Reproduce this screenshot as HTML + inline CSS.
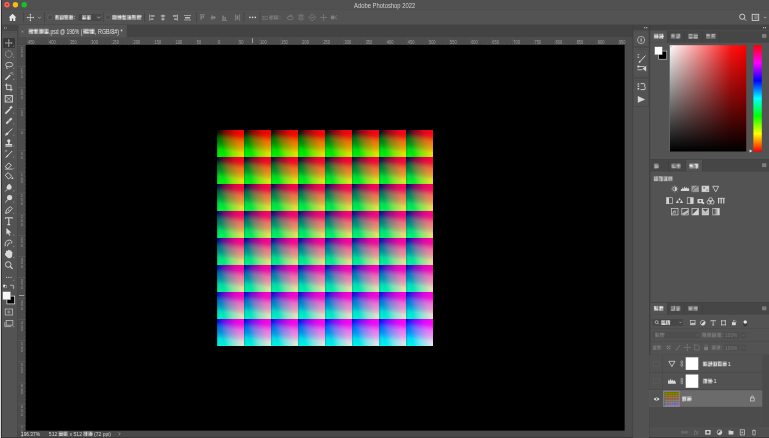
<!DOCTYPE html>
<html><head><meta charset="utf-8"><style>
html,body{margin:0;padding:0;width:769px;height:438px;overflow:hidden;background:#535353}
body{position:relative;font-family:"Liberation Sans",sans-serif}
.ov{position:absolute;left:0;top:0;will-change:transform}
svg text{font-family:"Liberation Sans",sans-serif}
.grid{position:absolute;left:0;top:0;width:769px;height:438px;filter:url(#satf)}
.t{position:absolute;width:27.02px;height:27.02px;
background:linear-gradient(to right,rgb(0,0,var(--b)),rgb(255,0,var(--b)));}
.t::after{content:"";position:absolute;inset:0;mix-blend-mode:screen;
background:linear-gradient(to bottom,rgb(0,0,0),rgb(0,255,0));}
</style></head><body>
<svg class="ov" width="769" height="438" viewBox="0 0 769 438"><rect x="0.00" y="0.00" width="769.00" height="438.00" fill="#535353" /><rect x="0.00" y="0.00" width="769.00" height="9.20" fill="#515151" /><rect x="0.00" y="9.00" width="769.00" height="0.60" fill="#464646" /><circle cx="7" cy="4.7" r="2.7" fill="#fd5d55"/><circle cx="15.4" cy="4.7" r="2.7" fill="#fdbb12"/><circle cx="24.2" cy="4.7" r="2.7" fill="#12c424"/><ellipse cx="7" cy="4.6" rx="1" ry="0.7" fill="#8c1a16"/><text x="354.10" y="7.80" font-size="6.4" fill="#d0d0d0" text-anchor="start" textLength="61.10" lengthAdjust="spacingAndGlyphs" >Adobe Photoshop 2022</text><rect x="0.00" y="9.50" width="769.00" height="15.30" fill="#535353" /><rect x="0.00" y="24.70" width="769.00" height="0.30" fill="#404040" /><rect x="1.30" y="25.00" width="16.00" height="413.00" fill="#535353" /><rect x="1.30" y="25.00" width="16.00" height="6.00" fill="#454545" /><rect x="17.20" y="25.00" width="0.60" height="413.00" fill="#3f3f3f" /><rect x="17.80" y="25.00" width="615.00" height="12.20" fill="#434343" /><rect x="18.40" y="25.00" width="108.40" height="12.20" fill="#545454" /><rect x="17.80" y="37.50" width="607.00" height="7.30" fill="#4c4c4c" /><rect x="17.80" y="37.50" width="7.70" height="394.00" fill="#4c4c4c" /><rect x="25.50" y="44.80" width="599.30" height="386.00" fill="#000000" /><rect x="624.80" y="37.50" width="8.00" height="400.00" fill="#4b4b4b" /><rect x="17.80" y="430.80" width="607.00" height="6.40" fill="#484848" /><rect x="0.00" y="437.00" width="769.00" height="1.00" fill="#3a3a3a" /><rect x="632.50" y="25.00" width="136.50" height="5.30" fill="#434343" /><rect x="632.60" y="25.00" width="0.60" height="413.00" fill="#3e3e3e" /><rect x="633.20" y="30.30" width="16.00" height="407.70" fill="#525252" /><rect x="649.20" y="25.00" width="1.20" height="413.00" fill="#3e3e3e" /><rect x="633.60" y="30.80" width="15.20" height="15.80" fill="#535353" stroke="#474747" stroke-width="0.6"/><rect x="633.60" y="47.60" width="15.20" height="29.60" fill="#535353" stroke="#474747" stroke-width="0.6"/><rect x="633.60" y="78.20" width="15.20" height="28.20" fill="#535353" stroke="#474747" stroke-width="0.6"/><rect x="650.40" y="30.80" width="118.60" height="12.00" fill="#464646" /><rect x="650.40" y="30.80" width="16.80" height="12.00" fill="#535353" /><rect x="650.40" y="42.80" width="118.60" height="116.30" fill="#535353" /><rect x="650.40" y="159.50" width="118.60" height="12.10" fill="#464646" /><rect x="685.60" y="159.50" width="16.40" height="12.10" fill="#535353" /><rect x="650.40" y="302.40" width="118.60" height="12.30" fill="#464646" /><rect x="650.40" y="302.40" width="16.80" height="12.30" fill="#535353" /><path d="M12.55 13.8 L8.7 17.6 L9.8 17.6 L9.8 21 L11.9 21 L11.9 18.6 L13.2 18.6 L13.2 21 L15.3 21 L15.3 17.6 L16.4 17.6 Z" fill="#e6e6e6"/><rect x="23.30" y="12.20" width="0.60" height="10.30" fill="#3f3f3f" /><g stroke="#d8d8d8" stroke-width="0.7" fill="none"><path d="M30.4 14.4 V20.7 M27.2 17.55 H33.6"/></g><g fill="#d8d8d8"><path d="M30.4 13.8 L29.4 15 H31.4Z M30.4 21.3 L29.4 20.1 H31.4Z M26.6 17.55 L27.8 16.55 V18.55Z M34.2 17.55 L33 16.55 V18.55Z"/></g><path d="M38 16.8 L39.4 18.4 L40.8 16.8" stroke="#b4b4b4" stroke-width="0.7" fill="none"/><rect x="44.00" y="12.20" width="0.60" height="10.30" fill="#3f3f3f" /><rect x="47.80" y="14.90" width="4.80" height="4.80" fill="#4a4a4a" rx="1.8" stroke="#6a6a6a" stroke-width="0.6"/><g fill="#dedede" opacity="1.0"><rect x="55.13" y="14.90" width="4.12" height="5.00" opacity="0.5"/><rect x="55.87" y="15.72" width="2.19" height="1.00" opacity="0.8"/><rect x="56.39" y="14.97" width="0.78" height="3.76" opacity="0.8"/><rect x="55.21" y="16.78" width="2.22" height="1.00" opacity="0.8"/><rect x="59.70" y="14.90" width="4.12" height="5.00" opacity="0.5"/><rect x="59.85" y="18.25" width="2.47" height="1.00" opacity="0.8"/><rect x="62.75" y="15.62" width="0.78" height="3.54" opacity="0.8"/><rect x="59.98" y="15.97" width="0.78" height="3.33" opacity="0.8"/><rect x="64.28" y="14.90" width="4.12" height="5.00" opacity="0.5"/><rect x="64.63" y="15.59" width="3.55" height="1.00" opacity="0.8"/><rect x="65.01" y="17.33" width="2.74" height="1.00" opacity="0.8"/><rect x="64.61" y="14.97" width="0.78" height="3.16" opacity="0.8"/><rect x="68.85" y="14.90" width="4.12" height="5.00" opacity="0.5"/><rect x="70.30" y="15.29" width="0.78" height="3.92" opacity="0.8"/><rect x="69.76" y="16.27" width="3.34" height="1.00" opacity="0.8"/><rect x="69.45" y="17.30" width="3.66" height="1.00" opacity="0.8"/></g><rect x="73.80" y="15.80" width="0.90" height="0.90" fill="#d0d0d0" /><rect x="73.80" y="18.30" width="0.90" height="0.90" fill="#d0d0d0" /><rect x="78.70" y="13.90" width="22.60" height="7.00" fill="#474747" rx="0.6"/><g fill="#dedede" opacity="1.0"><rect x="82.03" y="14.90" width="4.23" height="5.00" opacity="0.5"/><rect x="83.08" y="16.13" width="0.80" height="2.99" opacity="0.8"/><rect x="82.21" y="17.99" width="3.03" height="1.00" opacity="0.8"/><rect x="82.93" y="17.66" width="3.19" height="1.00" opacity="0.8"/><rect x="86.73" y="14.90" width="4.23" height="5.00" opacity="0.5"/><rect x="87.86" y="15.77" width="0.80" height="3.94" opacity="0.8"/><rect x="88.31" y="15.95" width="0.80" height="3.95" opacity="0.8"/><rect x="86.81" y="17.64" width="3.43" height="1.00" opacity="0.8"/></g><path d="M97.3 16.6 L98.7 18.2 L100.1 16.6" stroke="#c8c8c8" stroke-width="0.7" fill="none"/><rect x="103.20" y="12.20" width="0.60" height="10.30" fill="#3f3f3f" /><rect x="105.60" y="14.90" width="4.80" height="4.80" fill="#4a4a4a" rx="1.8" stroke="#6a6a6a" stroke-width="0.6"/><g fill="#dedede" opacity="1.0"><rect x="112.25" y="14.90" width="4.41" height="5.00" opacity="0.5"/><rect x="115.65" y="15.93" width="0.83" height="3.32" opacity="0.8"/><rect x="112.27" y="17.66" width="3.11" height="1.00" opacity="0.8"/><rect x="112.32" y="15.59" width="3.71" height="1.00" opacity="0.8"/><rect x="117.15" y="14.90" width="4.41" height="5.00" opacity="0.5"/><rect x="117.62" y="16.08" width="3.91" height="1.00" opacity="0.8"/><rect x="117.82" y="16.83" width="3.94" height="1.00" opacity="0.8"/><rect x="120.13" y="15.25" width="0.83" height="3.58" opacity="0.8"/><rect x="122.05" y="14.90" width="4.41" height="5.00" opacity="0.5"/><rect x="123.22" y="18.47" width="2.50" height="1.00" opacity="0.8"/><rect x="122.33" y="16.02" width="3.16" height="1.00" opacity="0.8"/><rect x="123.05" y="14.91" width="0.83" height="3.59" opacity="0.8"/><rect x="126.95" y="14.90" width="4.41" height="5.00" opacity="0.5"/><rect x="128.11" y="17.27" width="3.56" height="1.00" opacity="0.8"/><rect x="129.12" y="15.75" width="0.83" height="2.86" opacity="0.8"/><rect x="129.65" y="15.99" width="0.83" height="3.91" opacity="0.8"/><rect x="131.84" y="14.90" width="4.41" height="5.00" opacity="0.5"/><rect x="131.97" y="16.65" width="3.45" height="1.00" opacity="0.8"/><rect x="132.10" y="15.40" width="2.52" height="1.00" opacity="0.8"/><rect x="131.85" y="15.35" width="2.50" height="1.00" opacity="0.8"/><rect x="136.75" y="14.90" width="4.41" height="5.00" opacity="0.5"/><rect x="136.78" y="16.51" width="3.92" height="1.00" opacity="0.8"/><rect x="137.38" y="15.22" width="0.83" height="3.44" opacity="0.8"/><rect x="137.78" y="15.61" width="4.15" height="1.00" opacity="0.8"/></g><rect x="144.40" y="12.20" width="0.60" height="10.30" fill="#3f3f3f" /><g fill="#bdbdbd"><rect x="149.4" y="14.4" width="0.7" height="6.3"/><rect x="150.6" y="15.3" width="4" height="1.3"/><rect x="150.6" y="18.5" width="2.8" height="1.3"/><rect x="162.6" y="14.4" width="0.7" height="6.3"/><rect x="160.8" y="15.3" width="4.3" height="1.3"/><rect x="161.4" y="18.5" width="3.1" height="1.3"/><rect x="177.3" y="14.4" width="0.7" height="6.3"/><rect x="172.9" y="15.3" width="4" height="1.3"/><rect x="174.1" y="18.5" width="2.8" height="1.3"/><rect x="184" y="15.2" width="7" height="0.7"/><rect x="184" y="19.6" width="7" height="0.7"/><rect x="185" y="17" width="5" height="1.5"/></g><rect x="196.00" y="12.20" width="0.60" height="10.30" fill="#3f3f3f" /><g fill="#8a8a8a"><rect x="199.9" y="14.4" width="4.9" height="0.7"/><rect x="200.5" y="15.3" width="1.3" height="4.3"/><rect x="202.6" y="15.3" width="1.3" height="2.8"/><rect x="210.6" y="17.2" width="5.4" height="0.7"/><rect x="211.4" y="15.4" width="1.3" height="4.3"/><rect x="213.5" y="16.0" width="1.3" height="3.1"/><rect x="221.8" y="20.1" width="5.4" height="0.7"/><rect x="222.4" y="15.6" width="1.3" height="4.3"/><rect x="224.5" y="17.1" width="1.3" height="2.8"/><rect x="235" y="14.4" width="0.7" height="6.3"/><rect x="239.2" y="14.4" width="0.7" height="6.3"/><rect x="236.6" y="15.4" width="1.6" height="4.3"/></g><rect x="243.60" y="12.20" width="0.60" height="10.30" fill="#3f3f3f" /><g fill="#d6d6d6"><circle cx="249.9" cy="17.4" r="0.8"/><circle cx="252.6" cy="17.4" r="0.8"/><circle cx="255.3" cy="17.4" r="0.8"/></g><rect x="259.70" y="12.20" width="0.60" height="10.30" fill="#3f3f3f" /><text x="261.40" y="19.60" font-size="6.0" fill="#7e7e7e" text-anchor="start" textLength="6.80" lengthAdjust="spacingAndGlyphs" >3D</text><g fill="#7e7e7e" opacity="1.0"><rect x="269.24" y="15.10" width="4.32" height="4.60" opacity="0.5"/><rect x="269.34" y="17.00" width="2.36" height="0.92" opacity="0.8"/><rect x="270.23" y="16.24" width="2.47" height="0.92" opacity="0.8"/><rect x="269.87" y="18.61" width="2.44" height="0.92" opacity="0.8"/><rect x="274.04" y="15.10" width="4.32" height="4.60" opacity="0.5"/><rect x="274.27" y="15.71" width="0.82" height="3.99" opacity="0.8"/><rect x="276.42" y="15.40" width="0.82" height="3.20" opacity="0.8"/><rect x="274.68" y="17.99" width="3.66" height="0.92" opacity="0.8"/></g><rect x="279.60" y="15.80" width="0.80" height="0.80" fill="#7e7e7e" /><rect x="279.60" y="18.30" width="0.80" height="0.80" fill="#7e7e7e" /><g stroke="#7e7e7e" stroke-width="0.8" fill="none"><ellipse cx="290.2" cy="18" rx="3.2" ry="1.6"/><path d="M288.2 16.6 Q290 13.8 292.4 15.6"/><path d="M297.8 16.2 Q301 13.2 304.2 16.2 M297.8 18.6 Q301 21.6 304.2 18.6"/><rect x="299.8" y="15.8" width="2.4" height="2.2"/><path d="M312.3 13.9 L315.8 17.4 L312.3 20.9 L308.8 17.4Z"/><path d="M310.6 17.4 H314"/><path d="M323.6 14 V20.8 M320.2 17.4 H327"/><path d="M336.8 15.3 L335.2 17.4 L336.8 19.5" /></g><rect x="330.9" y="15.6" width="3.6" height="3.6" fill="#7e7e7e"/><g stroke="#d8d8d8" stroke-width="0.9" fill="none"><circle cx="742.2" cy="16.7" r="2.6"/><path d="M744.1 18.6 L746 20.5"/></g><rect x="752.2" y="14.3" width="6.5" height="6.1" fill="none" stroke="#cfcfcf" stroke-width="0.9"/><rect x="754.3" y="15.2" width="3.6" height="4.2" fill="#7a7a7a"/><path d="M764 16.9 L765.2 18.1 L766.4 16.9" stroke="#c8c8c8" stroke-width="0.7" fill="none"/><path d="M3.8 26.8 L5 28 L3.8 29.2 M5.6 26.8 L6.8 28 L5.6 29.2" stroke="#a8a8a8" stroke-width="0.6" fill="none"/><path d="M3 32.4 H15.5" stroke="#4a4a4a" stroke-width="0.6" stroke-dasharray="0.6 0.6"/><rect x="3.05" y="38.00" width="11.95" height="9.90" fill="#383838" /><path d="M8.8 39.8 V46.2 M5.6000000000000005 43 H12.0" stroke="#d8d8d8" stroke-width="0.6"/><path d="M8.8 39.2 l-0.8 1.1 h1.6Z M8.8 46.8 l-0.8 -1.1 h1.6Z M5.000000000000001 43 l1.1 -0.8 v1.6Z M12.600000000000001 43 l-1.1 -0.8 v1.6Z" fill="#d8d8d8"/><circle cx="8.8" cy="54.1" r="3.3" fill="none" stroke="#d8d8d8" stroke-width="0.7" stroke-dasharray="0.9 0.7"/><ellipse cx="9.200000000000001" cy="64.60000000000001" rx="3.6" ry="2.3" fill="none" stroke="#d8d8d8" stroke-width="0.8"/><path d="M6.800000000000001 66.2 q-0.6 1.6 0.6 2.8" stroke="#d8d8d8" stroke-width="0.9" fill="none"/><path d="M5.4 79.80000000000001 L10.200000000000001 75.0" stroke="#d8d8d8" stroke-width="1.6"/><path d="M11.200000000000001 72.2 v1.6 M12.200000000000001 74.2 h1.4 M12.0 72.80000000000001 l0.9 -0.9 M9.600000000000001 73.0 l0.6 0.6" stroke="#d8d8d8" stroke-width="0.6"/><path d="M6.6000000000000005 83.4 V89.60000000000001 H12.600000000000001 M4.800000000000001 85.2 H11.0 V91.4" stroke="#d8d8d8" stroke-width="0.9" fill="none"/><rect x="5.200000000000001" y="95.6" width="7.2" height="6.4" fill="none" stroke="#d8d8d8" stroke-width="0.9"/><path d="M5.200000000000001 95.6 L12.4 102.0 M12.4 95.6 L5.200000000000001 102.0" stroke="#d8d8d8" stroke-width="0.6"/><path d="M5.4 113.6 L10.0 109" stroke="#d8d8d8" stroke-width="1.7"/><path d="M9.200000000000001 107.8 L11.200000000000001 105.8 L12.600000000000001 107.2 L10.600000000000001 109.2Z" fill="#d8d8d8"/><path d="M5.6000000000000005 122.9 L11.0 117.5 L12.4 118.9 L7.000000000000001 124.3Z" fill="#d8d8d8"/><circle cx="9.0" cy="120.9" r="0.6" fill="#555"/><path d="M7.4 133.4 L12.200000000000001 128.6" stroke="#d8d8d8" stroke-width="1.0"/><path d="M5.000000000000001 135.8 Q5.4 132.6 7.4 132.4 L8.600000000000001 133.6 Q8.200000000000001 135.6 5.000000000000001 135.8Z" fill="#d8d8d8"/><circle cx="8.8" cy="140.8" r="1.6" fill="#d8d8d8"/><rect x="8.100000000000001" y="142" width="1.4" height="2" fill="#d8d8d8"/><rect x="5.4" y="144" width="6.8" height="1.6" fill="#d8d8d8"/><rect x="5.4" y="146" width="6.8" height="0.7" fill="#d8d8d8"/><path d="M5.800000000000001 157.6 L12.200000000000001 151" stroke="#d8d8d8" stroke-width="1"/><path d="M5.4 158 L7.4 154.8 L8.4 155.8Z" fill="#d8d8d8"/><path d="M4.800000000000001 151.6 q1 -1.6 2.4 -0.6" stroke="#d8d8d8" stroke-width="0.7" fill="none"/><path d="M5.200000000000001 166.7 L8.8 162.9 L11.4 165.3 L7.800000000000001 168.7 Z" fill="none" stroke="#d8d8d8" stroke-width="0.9"/><path d="M5.200000000000001 169.1 H12.600000000000001" stroke="#d8d8d8" stroke-width="0.8"/><path d="M5.200000000000001 175.2 L8.200000000000001 172.6 L11.600000000000001 176.2 L8.600000000000001 179.0Z" fill="none" stroke="#d8d8d8" stroke-width="0.9"/><circle cx="12.4" cy="178.2" r="0.9" fill="#d8d8d8"/><path d="M9.200000000000001 183.79999999999998 Q12.8 186.2 11.200000000000001 189.0 Q8.8 190.6 6.800000000000001 188.79999999999998 Q5.800000000000001 186.2 9.200000000000001 183.79999999999998Z" fill="#d8d8d8"/><path d="M7.200000000000001 189.4 L5.4 191.4" stroke="#d8d8d8" stroke-width="0.9"/><circle cx="9.600000000000001" cy="197.60000000000002" r="2.6" fill="#d8d8d8"/><path d="M7.800000000000001 199.8 L5.200000000000001 202.4" stroke="#d8d8d8" stroke-width="1"/><path d="M5.6000000000000005 213.39999999999998 L6.6000000000000005 209.6 L10.4 206.6 L12.200000000000001 208.39999999999998 L9.200000000000001 212.2Z" fill="none" stroke="#d8d8d8" stroke-width="0.9"/><circle cx="8.8" cy="210.2" r="0.6" fill="#d8d8d8"/><path d="M5.4 217.8 H12.200000000000001 V218.8 M5.4 217.8 V218.8 M8.8 217.8 V224.6 M7.4 224.6 H10.200000000000001" stroke="#d8d8d8" stroke-width="1.1" fill="none"/><path d="M6.4 228.0 L6.4 234.60000000000002 L8.0 233.20000000000002 L9.4 235.8 L10.4 235.20000000000002 L9.200000000000001 232.70000000000002 L11.4 232.60000000000002Z" fill="#d8d8d8"/><path d="M5.000000000000001 246.3 Q5.000000000000001 239.70000000000002 9.8 240.10000000000002 Q12.8 240.70000000000002 11.4 243.5 M7.4 246.3 Q7.800000000000001 242.5 10.200000000000001 242.70000000000002" stroke="#d8d8d8" stroke-width="0.9" fill="none"/><path d="M6.000000000000001 253.10000000000002 V251.10000000000002 Q7.200000000000001 249.9 8.0 251.10000000000002 V250.3 Q9.200000000000001 249.3 10.0 250.5 Q11.4 250.10000000000002 11.600000000000001 251.70000000000002 Q12.600000000000001 251.70000000000002 12.4 253.3 L12.0 256.7 Q10.4 258.7 8.0 258.1 L5.000000000000001 254.9 Q4.800000000000001 252.9 6.000000000000001 253.10000000000002Z" fill="#d8d8d8"/><circle cx="8.200000000000001" cy="264.5" r="2.8" fill="none" stroke="#d8d8d8" stroke-width="0.9"/><path d="M10.200000000000001 266.5 L12.600000000000001 268.90000000000003" stroke="#d8d8d8" stroke-width="1.1"/><path d="M14.2 67.40 L14.2 68.80 L12.8 68.80Z" fill="#9a9a9a"/><path d="M14.2 78.60 L14.2 80.00 L12.8 80.00Z" fill="#9a9a9a"/><path d="M14.2 112.20 L14.2 113.60 L12.8 113.60Z" fill="#9a9a9a"/><path d="M14.2 122.90 L14.2 124.30 L12.8 124.30Z" fill="#9a9a9a"/><path d="M14.2 134.20 L14.2 135.60 L12.8 135.60Z" fill="#9a9a9a"/><path d="M14.2 145.20 L14.2 146.60 L12.8 146.60Z" fill="#9a9a9a"/><path d="M14.2 156.20 L14.2 157.60 L12.8 157.60Z" fill="#9a9a9a"/><path d="M14.2 167.70 L14.2 169.10 L12.8 169.10Z" fill="#9a9a9a"/><path d="M14.2 189.80 L14.2 191.20 L12.8 191.20Z" fill="#9a9a9a"/><path d="M14.2 201.00 L14.2 202.40 L12.8 202.40Z" fill="#9a9a9a"/><path d="M14.2 212.40 L14.2 213.80 L12.8 213.80Z" fill="#9a9a9a"/><path d="M14.2 234.00 L14.2 235.40 L12.8 235.40Z" fill="#9a9a9a"/><path d="M14.2 245.50 L14.2 246.90 L12.8 246.90Z" fill="#9a9a9a"/><path d="M14.2 256.50 L14.2 257.90 L12.8 257.90Z" fill="#9a9a9a"/><path d="M14.2 45.20 L14.2 46.60 L12.8 46.60Z" fill="#9a9a9a"/><path d="M14.2 56.30 L14.2 57.70 L12.8 57.70Z" fill="#9a9a9a"/><g fill="#d8d8d8"><circle cx="6.6" cy="277.3" r="0.6"/><circle cx="8.8" cy="277.3" r="0.6"/><circle cx="11" cy="277.3" r="0.6"/></g><path d="M14.2 279.40 L14.2 280.80 L12.8 280.80Z" fill="#9a9a9a"/><rect x="3.9" y="285.4" width="2.4" height="2.4" fill="#111" stroke="#ddd" stroke-width="0.5"/><rect x="3.2" y="284.7" width="2.1" height="2.1" fill="#eee"/><path d="M10.6 285.3 H13.6 V288.4" stroke="#ddd" stroke-width="0.6" fill="none"/><path d="M10.2 285.3 l1 -0.8 v1.6Z M13.6 288.8 l-0.8 -1 h1.6Z" fill="#ddd"/><rect x="6.9" y="296.1" width="7.8" height="7.8" fill="#000" stroke="#e8e8e8" stroke-width="0.7"/><rect x="2.7" y="291.6" width="8" height="8.2" fill="#f6f6f6" stroke="#555" stroke-width="0.3"/><rect x="5.2" y="309" width="7.4" height="6" fill="none" stroke="#bdbdbd" stroke-width="0.8"/><circle cx="8.9" cy="312" r="1.6" fill="#8a8a8a"/><rect x="6.2" y="320.4" width="6.6" height="4.8" fill="none" stroke="#bdbdbd" stroke-width="0.8"/><path d="M4.8 322.2 V326.6 H11.2" stroke="#bdbdbd" stroke-width="0.8" fill="none"/><path d="M14.2 325.80 L14.2 327.20 L12.8 327.20Z" fill="#9a9a9a"/><path d="M21.6 30.7 L23.4 32.5 M23.4 30.7 L21.6 32.5" stroke="#a8a8a8" stroke-width="0.6"/><g fill="#e2e2e2" opacity="1.0"><rect x="28.56" y="28.70" width="4.66" height="5.20" opacity="0.5"/><rect x="29.61" y="29.83" width="4.37" height="1.04" opacity="0.8"/><rect x="31.51" y="29.76" width="0.88" height="4.14" opacity="0.8"/><rect x="29.02" y="30.98" width="2.39" height="1.04" opacity="0.8"/><rect x="33.73" y="28.70" width="4.66" height="5.20" opacity="0.5"/><rect x="34.07" y="30.05" width="3.76" height="1.04" opacity="0.8"/><rect x="35.44" y="29.92" width="0.88" height="3.98" opacity="0.8"/><rect x="35.15" y="28.99" width="0.88" height="3.33" opacity="0.8"/><rect x="38.91" y="28.70" width="4.66" height="5.20" opacity="0.5"/><rect x="39.72" y="29.76" width="4.19" height="1.04" opacity="0.8"/><rect x="40.73" y="29.55" width="0.88" height="4.35" opacity="0.8"/><rect x="40.09" y="31.54" width="3.95" height="1.04" opacity="0.8"/><rect x="44.08" y="28.70" width="4.66" height="5.20" opacity="0.5"/><rect x="45.90" y="28.93" width="0.88" height="4.50" opacity="0.8"/><rect x="45.34" y="32.08" width="3.15" height="1.04" opacity="0.8"/><rect x="45.02" y="32.65" width="2.68" height="1.04" opacity="0.8"/></g><text x="49.00" y="33.60" font-size="6.5" fill="#e0e0e0" text-anchor="start" textLength="33.30" lengthAdjust="spacingAndGlyphs" >.psd @ 196% (</text><g fill="#e2e2e2" opacity="1.0"><rect x="83.11" y="28.70" width="5.49" height="5.20" opacity="0.5"/><rect x="84.48" y="29.55" width="4.71" height="1.04" opacity="0.8"/><rect x="84.60" y="32.18" width="4.35" height="1.04" opacity="0.8"/><rect x="83.30" y="31.10" width="2.78" height="1.04" opacity="0.8"/><rect x="89.21" y="28.70" width="5.49" height="5.20" opacity="0.5"/><rect x="92.04" y="29.38" width="1.04" height="4.52" opacity="0.8"/><rect x="90.46" y="32.36" width="3.26" height="1.04" opacity="0.8"/><rect x="89.57" y="30.10" width="4.18" height="1.04" opacity="0.8"/></g><text x="95.00" y="33.60" font-size="6.5" fill="#e0e0e0" text-anchor="start" textLength="27.60" lengthAdjust="spacingAndGlyphs" >, RGB/8#) *</text><rect x="27.00" y="37.50" width="0.50" height="7.30" fill="#595959" /><text x="27.95" y="44.00" font-size="5.2" fill="#a0a0a0" text-anchor="start" textLength="6.60" lengthAdjust="spacingAndGlyphs" >450</text><rect x="31.28" y="43.60" width="0.40" height="1.20" fill="#585858" /><rect x="35.50" y="43.60" width="0.40" height="1.20" fill="#585858" /><rect x="39.72" y="43.60" width="0.40" height="1.20" fill="#585858" /><rect x="43.94" y="43.60" width="0.40" height="1.20" fill="#585858" /><rect x="48.16" y="42.60" width="0.40" height="2.20" fill="#585858" /><rect x="52.38" y="43.60" width="0.40" height="1.20" fill="#585858" /><rect x="56.60" y="43.60" width="0.40" height="1.20" fill="#585858" /><rect x="60.82" y="43.60" width="0.40" height="1.20" fill="#585858" /><rect x="65.04" y="43.60" width="0.40" height="1.20" fill="#585858" /><rect x="48.11" y="37.50" width="0.50" height="7.30" fill="#595959" /><text x="49.06" y="44.00" font-size="5.2" fill="#a0a0a0" text-anchor="start" textLength="6.60" lengthAdjust="spacingAndGlyphs" >400</text><rect x="52.38" y="43.60" width="0.40" height="1.20" fill="#585858" /><rect x="56.60" y="43.60" width="0.40" height="1.20" fill="#585858" /><rect x="60.82" y="43.60" width="0.40" height="1.20" fill="#585858" /><rect x="65.04" y="43.60" width="0.40" height="1.20" fill="#585858" /><rect x="69.26" y="42.60" width="0.40" height="2.20" fill="#585858" /><rect x="73.49" y="43.60" width="0.40" height="1.20" fill="#585858" /><rect x="77.71" y="43.60" width="0.40" height="1.20" fill="#585858" /><rect x="81.93" y="43.60" width="0.40" height="1.20" fill="#585858" /><rect x="86.15" y="43.60" width="0.40" height="1.20" fill="#585858" /><rect x="69.22" y="37.50" width="0.50" height="7.30" fill="#595959" /><text x="70.17" y="44.00" font-size="5.2" fill="#a0a0a0" text-anchor="start" textLength="6.60" lengthAdjust="spacingAndGlyphs" >350</text><rect x="73.49" y="43.60" width="0.40" height="1.20" fill="#585858" /><rect x="77.71" y="43.60" width="0.40" height="1.20" fill="#585858" /><rect x="81.93" y="43.60" width="0.40" height="1.20" fill="#585858" /><rect x="86.15" y="43.60" width="0.40" height="1.20" fill="#585858" /><rect x="90.37" y="42.60" width="0.40" height="2.20" fill="#585858" /><rect x="94.59" y="43.60" width="0.40" height="1.20" fill="#585858" /><rect x="98.81" y="43.60" width="0.40" height="1.20" fill="#585858" /><rect x="103.03" y="43.60" width="0.40" height="1.20" fill="#585858" /><rect x="107.25" y="43.60" width="0.40" height="1.20" fill="#585858" /><rect x="90.32" y="37.50" width="0.50" height="7.30" fill="#595959" /><text x="91.27" y="44.00" font-size="5.2" fill="#a0a0a0" text-anchor="start" textLength="6.60" lengthAdjust="spacingAndGlyphs" >300</text><rect x="94.59" y="43.60" width="0.40" height="1.20" fill="#585858" /><rect x="98.81" y="43.60" width="0.40" height="1.20" fill="#585858" /><rect x="103.03" y="43.60" width="0.40" height="1.20" fill="#585858" /><rect x="107.25" y="43.60" width="0.40" height="1.20" fill="#585858" /><rect x="111.47" y="42.60" width="0.40" height="2.20" fill="#585858" /><rect x="115.70" y="43.60" width="0.40" height="1.20" fill="#585858" /><rect x="119.92" y="43.60" width="0.40" height="1.20" fill="#585858" /><rect x="124.14" y="43.60" width="0.40" height="1.20" fill="#585858" /><rect x="128.36" y="43.60" width="0.40" height="1.20" fill="#585858" /><rect x="111.42" y="37.50" width="0.50" height="7.30" fill="#595959" /><text x="112.38" y="44.00" font-size="5.2" fill="#a0a0a0" text-anchor="start" textLength="6.60" lengthAdjust="spacingAndGlyphs" >250</text><rect x="115.70" y="43.60" width="0.40" height="1.20" fill="#585858" /><rect x="119.92" y="43.60" width="0.40" height="1.20" fill="#585858" /><rect x="124.14" y="43.60" width="0.40" height="1.20" fill="#585858" /><rect x="128.36" y="43.60" width="0.40" height="1.20" fill="#585858" /><rect x="132.58" y="42.60" width="0.40" height="2.20" fill="#585858" /><rect x="136.80" y="43.60" width="0.40" height="1.20" fill="#585858" /><rect x="141.02" y="43.60" width="0.40" height="1.20" fill="#585858" /><rect x="145.24" y="43.60" width="0.40" height="1.20" fill="#585858" /><rect x="149.46" y="43.60" width="0.40" height="1.20" fill="#585858" /><rect x="132.53" y="37.50" width="0.50" height="7.30" fill="#595959" /><text x="133.48" y="44.00" font-size="5.2" fill="#a0a0a0" text-anchor="start" textLength="6.60" lengthAdjust="spacingAndGlyphs" >200</text><rect x="136.80" y="43.60" width="0.40" height="1.20" fill="#585858" /><rect x="141.02" y="43.60" width="0.40" height="1.20" fill="#585858" /><rect x="145.24" y="43.60" width="0.40" height="1.20" fill="#585858" /><rect x="149.46" y="43.60" width="0.40" height="1.20" fill="#585858" /><rect x="153.68" y="42.60" width="0.40" height="2.20" fill="#585858" /><rect x="157.91" y="43.60" width="0.40" height="1.20" fill="#585858" /><rect x="162.13" y="43.60" width="0.40" height="1.20" fill="#585858" /><rect x="166.35" y="43.60" width="0.40" height="1.20" fill="#585858" /><rect x="170.57" y="43.60" width="0.40" height="1.20" fill="#585858" /><rect x="153.63" y="37.50" width="0.50" height="7.30" fill="#595959" /><text x="154.58" y="44.00" font-size="5.2" fill="#a0a0a0" text-anchor="start" textLength="6.60" lengthAdjust="spacingAndGlyphs" >150</text><rect x="157.91" y="43.60" width="0.40" height="1.20" fill="#585858" /><rect x="162.13" y="43.60" width="0.40" height="1.20" fill="#585858" /><rect x="166.35" y="43.60" width="0.40" height="1.20" fill="#585858" /><rect x="170.57" y="43.60" width="0.40" height="1.20" fill="#585858" /><rect x="174.79" y="42.60" width="0.40" height="2.20" fill="#585858" /><rect x="179.01" y="43.60" width="0.40" height="1.20" fill="#585858" /><rect x="183.23" y="43.60" width="0.40" height="1.20" fill="#585858" /><rect x="187.45" y="43.60" width="0.40" height="1.20" fill="#585858" /><rect x="191.67" y="43.60" width="0.40" height="1.20" fill="#585858" /><rect x="174.74" y="37.50" width="0.50" height="7.30" fill="#595959" /><text x="175.69" y="44.00" font-size="5.2" fill="#a0a0a0" text-anchor="start" textLength="6.60" lengthAdjust="spacingAndGlyphs" >100</text><rect x="179.01" y="43.60" width="0.40" height="1.20" fill="#585858" /><rect x="183.23" y="43.60" width="0.40" height="1.20" fill="#585858" /><rect x="187.45" y="43.60" width="0.40" height="1.20" fill="#585858" /><rect x="191.67" y="43.60" width="0.40" height="1.20" fill="#585858" /><rect x="195.89" y="42.60" width="0.40" height="2.20" fill="#585858" /><rect x="200.12" y="43.60" width="0.40" height="1.20" fill="#585858" /><rect x="204.34" y="43.60" width="0.40" height="1.20" fill="#585858" /><rect x="208.56" y="43.60" width="0.40" height="1.20" fill="#585858" /><rect x="212.78" y="43.60" width="0.40" height="1.20" fill="#585858" /><rect x="195.84" y="37.50" width="0.50" height="7.30" fill="#595959" /><text x="196.79" y="44.00" font-size="5.2" fill="#a0a0a0" text-anchor="start" textLength="4.40" lengthAdjust="spacingAndGlyphs" >50</text><rect x="200.12" y="43.60" width="0.40" height="1.20" fill="#585858" /><rect x="204.34" y="43.60" width="0.40" height="1.20" fill="#585858" /><rect x="208.56" y="43.60" width="0.40" height="1.20" fill="#585858" /><rect x="212.78" y="43.60" width="0.40" height="1.20" fill="#585858" /><rect x="217.00" y="42.60" width="0.40" height="2.20" fill="#585858" /><rect x="221.22" y="43.60" width="0.40" height="1.20" fill="#585858" /><rect x="225.44" y="43.60" width="0.40" height="1.20" fill="#585858" /><rect x="229.66" y="43.60" width="0.40" height="1.20" fill="#585858" /><rect x="233.88" y="43.60" width="0.40" height="1.20" fill="#585858" /><rect x="216.95" y="37.50" width="0.50" height="7.30" fill="#595959" /><text x="217.90" y="44.00" font-size="5.2" fill="#a0a0a0" text-anchor="start" textLength="2.30" lengthAdjust="spacingAndGlyphs" >0</text><rect x="221.22" y="43.60" width="0.40" height="1.20" fill="#585858" /><rect x="225.44" y="43.60" width="0.40" height="1.20" fill="#585858" /><rect x="229.66" y="43.60" width="0.40" height="1.20" fill="#585858" /><rect x="233.88" y="43.60" width="0.40" height="1.20" fill="#585858" /><rect x="238.10" y="42.60" width="0.40" height="2.20" fill="#585858" /><rect x="242.33" y="43.60" width="0.40" height="1.20" fill="#585858" /><rect x="246.55" y="43.60" width="0.40" height="1.20" fill="#585858" /><rect x="250.77" y="43.60" width="0.40" height="1.20" fill="#585858" /><rect x="254.99" y="43.60" width="0.40" height="1.20" fill="#585858" /><rect x="238.05" y="37.50" width="0.50" height="7.30" fill="#595959" /><text x="239.00" y="44.00" font-size="5.2" fill="#a0a0a0" text-anchor="start" textLength="4.40" lengthAdjust="spacingAndGlyphs" >50</text><rect x="242.33" y="43.60" width="0.40" height="1.20" fill="#585858" /><rect x="246.55" y="43.60" width="0.40" height="1.20" fill="#585858" /><rect x="250.77" y="43.60" width="0.40" height="1.20" fill="#585858" /><rect x="254.99" y="43.60" width="0.40" height="1.20" fill="#585858" /><rect x="259.21" y="42.60" width="0.40" height="2.20" fill="#585858" /><rect x="263.43" y="43.60" width="0.40" height="1.20" fill="#585858" /><rect x="267.65" y="43.60" width="0.40" height="1.20" fill="#585858" /><rect x="271.87" y="43.60" width="0.40" height="1.20" fill="#585858" /><rect x="276.09" y="43.60" width="0.40" height="1.20" fill="#585858" /><rect x="259.16" y="37.50" width="0.50" height="7.30" fill="#595959" /><text x="260.11" y="44.00" font-size="5.2" fill="#a0a0a0" text-anchor="start" textLength="6.60" lengthAdjust="spacingAndGlyphs" >100</text><rect x="263.43" y="43.60" width="0.40" height="1.20" fill="#585858" /><rect x="267.65" y="43.60" width="0.40" height="1.20" fill="#585858" /><rect x="271.87" y="43.60" width="0.40" height="1.20" fill="#585858" /><rect x="276.09" y="43.60" width="0.40" height="1.20" fill="#585858" /><rect x="280.31" y="42.60" width="0.40" height="2.20" fill="#585858" /><rect x="284.54" y="43.60" width="0.40" height="1.20" fill="#585858" /><rect x="288.76" y="43.60" width="0.40" height="1.20" fill="#585858" /><rect x="292.98" y="43.60" width="0.40" height="1.20" fill="#585858" /><rect x="297.20" y="43.60" width="0.40" height="1.20" fill="#585858" /><rect x="280.26" y="37.50" width="0.50" height="7.30" fill="#595959" /><text x="281.21" y="44.00" font-size="5.2" fill="#a0a0a0" text-anchor="start" textLength="6.60" lengthAdjust="spacingAndGlyphs" >150</text><rect x="284.54" y="43.60" width="0.40" height="1.20" fill="#585858" /><rect x="288.76" y="43.60" width="0.40" height="1.20" fill="#585858" /><rect x="292.98" y="43.60" width="0.40" height="1.20" fill="#585858" /><rect x="297.20" y="43.60" width="0.40" height="1.20" fill="#585858" /><rect x="301.42" y="42.60" width="0.40" height="2.20" fill="#585858" /><rect x="305.64" y="43.60" width="0.40" height="1.20" fill="#585858" /><rect x="309.86" y="43.60" width="0.40" height="1.20" fill="#585858" /><rect x="314.08" y="43.60" width="0.40" height="1.20" fill="#585858" /><rect x="318.30" y="43.60" width="0.40" height="1.20" fill="#585858" /><rect x="301.37" y="37.50" width="0.50" height="7.30" fill="#595959" /><text x="302.32" y="44.00" font-size="5.2" fill="#a0a0a0" text-anchor="start" textLength="6.60" lengthAdjust="spacingAndGlyphs" >200</text><rect x="305.64" y="43.60" width="0.40" height="1.20" fill="#585858" /><rect x="309.86" y="43.60" width="0.40" height="1.20" fill="#585858" /><rect x="314.08" y="43.60" width="0.40" height="1.20" fill="#585858" /><rect x="318.30" y="43.60" width="0.40" height="1.20" fill="#585858" /><rect x="322.53" y="42.60" width="0.40" height="2.20" fill="#585858" /><rect x="326.75" y="43.60" width="0.40" height="1.20" fill="#585858" /><rect x="330.97" y="43.60" width="0.40" height="1.20" fill="#585858" /><rect x="335.19" y="43.60" width="0.40" height="1.20" fill="#585858" /><rect x="339.41" y="43.60" width="0.40" height="1.20" fill="#585858" /><rect x="322.47" y="37.50" width="0.50" height="7.30" fill="#595959" /><text x="323.42" y="44.00" font-size="5.2" fill="#a0a0a0" text-anchor="start" textLength="6.60" lengthAdjust="spacingAndGlyphs" >250</text><rect x="326.75" y="43.60" width="0.40" height="1.20" fill="#585858" /><rect x="330.97" y="43.60" width="0.40" height="1.20" fill="#585858" /><rect x="335.19" y="43.60" width="0.40" height="1.20" fill="#585858" /><rect x="339.41" y="43.60" width="0.40" height="1.20" fill="#585858" /><rect x="343.63" y="42.60" width="0.40" height="2.20" fill="#585858" /><rect x="347.85" y="43.60" width="0.40" height="1.20" fill="#585858" /><rect x="352.07" y="43.60" width="0.40" height="1.20" fill="#585858" /><rect x="356.29" y="43.60" width="0.40" height="1.20" fill="#585858" /><rect x="360.51" y="43.60" width="0.40" height="1.20" fill="#585858" /><rect x="343.58" y="37.50" width="0.50" height="7.30" fill="#595959" /><text x="344.53" y="44.00" font-size="5.2" fill="#a0a0a0" text-anchor="start" textLength="6.60" lengthAdjust="spacingAndGlyphs" >300</text><rect x="347.85" y="43.60" width="0.40" height="1.20" fill="#585858" /><rect x="352.07" y="43.60" width="0.40" height="1.20" fill="#585858" /><rect x="356.29" y="43.60" width="0.40" height="1.20" fill="#585858" /><rect x="360.51" y="43.60" width="0.40" height="1.20" fill="#585858" /><rect x="364.74" y="42.60" width="0.40" height="2.20" fill="#585858" /><rect x="368.96" y="43.60" width="0.40" height="1.20" fill="#585858" /><rect x="373.18" y="43.60" width="0.40" height="1.20" fill="#585858" /><rect x="377.40" y="43.60" width="0.40" height="1.20" fill="#585858" /><rect x="381.62" y="43.60" width="0.40" height="1.20" fill="#585858" /><rect x="364.68" y="37.50" width="0.50" height="7.30" fill="#595959" /><text x="365.63" y="44.00" font-size="5.2" fill="#a0a0a0" text-anchor="start" textLength="6.60" lengthAdjust="spacingAndGlyphs" >350</text><rect x="368.96" y="43.60" width="0.40" height="1.20" fill="#585858" /><rect x="373.18" y="43.60" width="0.40" height="1.20" fill="#585858" /><rect x="377.40" y="43.60" width="0.40" height="1.20" fill="#585858" /><rect x="381.62" y="43.60" width="0.40" height="1.20" fill="#585858" /><rect x="385.84" y="42.60" width="0.40" height="2.20" fill="#585858" /><rect x="390.06" y="43.60" width="0.40" height="1.20" fill="#585858" /><rect x="394.28" y="43.60" width="0.40" height="1.20" fill="#585858" /><rect x="398.50" y="43.60" width="0.40" height="1.20" fill="#585858" /><rect x="402.72" y="43.60" width="0.40" height="1.20" fill="#585858" /><rect x="385.79" y="37.50" width="0.50" height="7.30" fill="#595959" /><text x="386.74" y="44.00" font-size="5.2" fill="#a0a0a0" text-anchor="start" textLength="6.60" lengthAdjust="spacingAndGlyphs" >400</text><rect x="390.06" y="43.60" width="0.40" height="1.20" fill="#585858" /><rect x="394.28" y="43.60" width="0.40" height="1.20" fill="#585858" /><rect x="398.50" y="43.60" width="0.40" height="1.20" fill="#585858" /><rect x="402.72" y="43.60" width="0.40" height="1.20" fill="#585858" /><rect x="406.94" y="42.60" width="0.40" height="2.20" fill="#585858" /><rect x="411.17" y="43.60" width="0.40" height="1.20" fill="#585858" /><rect x="415.39" y="43.60" width="0.40" height="1.20" fill="#585858" /><rect x="419.61" y="43.60" width="0.40" height="1.20" fill="#585858" /><rect x="423.83" y="43.60" width="0.40" height="1.20" fill="#585858" /><rect x="406.89" y="37.50" width="0.50" height="7.30" fill="#595959" /><text x="407.84" y="44.00" font-size="5.2" fill="#a0a0a0" text-anchor="start" textLength="6.60" lengthAdjust="spacingAndGlyphs" >450</text><rect x="411.17" y="43.60" width="0.40" height="1.20" fill="#585858" /><rect x="415.39" y="43.60" width="0.40" height="1.20" fill="#585858" /><rect x="419.61" y="43.60" width="0.40" height="1.20" fill="#585858" /><rect x="423.83" y="43.60" width="0.40" height="1.20" fill="#585858" /><rect x="428.05" y="42.60" width="0.40" height="2.20" fill="#585858" /><rect x="432.27" y="43.60" width="0.40" height="1.20" fill="#585858" /><rect x="436.49" y="43.60" width="0.40" height="1.20" fill="#585858" /><rect x="440.71" y="43.60" width="0.40" height="1.20" fill="#585858" /><rect x="444.93" y="43.60" width="0.40" height="1.20" fill="#585858" /><rect x="428.00" y="37.50" width="0.50" height="7.30" fill="#595959" /><text x="428.95" y="44.00" font-size="5.2" fill="#a0a0a0" text-anchor="start" textLength="6.60" lengthAdjust="spacingAndGlyphs" >500</text><rect x="432.27" y="43.60" width="0.40" height="1.20" fill="#585858" /><rect x="436.49" y="43.60" width="0.40" height="1.20" fill="#585858" /><rect x="440.71" y="43.60" width="0.40" height="1.20" fill="#585858" /><rect x="444.93" y="43.60" width="0.40" height="1.20" fill="#585858" /><rect x="449.16" y="42.60" width="0.40" height="2.20" fill="#585858" /><rect x="453.38" y="43.60" width="0.40" height="1.20" fill="#585858" /><rect x="457.60" y="43.60" width="0.40" height="1.20" fill="#585858" /><rect x="461.82" y="43.60" width="0.40" height="1.20" fill="#585858" /><rect x="466.04" y="43.60" width="0.40" height="1.20" fill="#585858" /><rect x="449.10" y="37.50" width="0.50" height="7.30" fill="#595959" /><text x="450.05" y="44.00" font-size="5.2" fill="#a0a0a0" text-anchor="start" textLength="6.60" lengthAdjust="spacingAndGlyphs" >550</text><rect x="453.38" y="43.60" width="0.40" height="1.20" fill="#585858" /><rect x="457.60" y="43.60" width="0.40" height="1.20" fill="#585858" /><rect x="461.82" y="43.60" width="0.40" height="1.20" fill="#585858" /><rect x="466.04" y="43.60" width="0.40" height="1.20" fill="#585858" /><rect x="470.26" y="42.60" width="0.40" height="2.20" fill="#585858" /><rect x="474.48" y="43.60" width="0.40" height="1.20" fill="#585858" /><rect x="478.70" y="43.60" width="0.40" height="1.20" fill="#585858" /><rect x="482.92" y="43.60" width="0.40" height="1.20" fill="#585858" /><rect x="487.14" y="43.60" width="0.40" height="1.20" fill="#585858" /><rect x="470.21" y="37.50" width="0.50" height="7.30" fill="#595959" /><text x="471.16" y="44.00" font-size="5.2" fill="#a0a0a0" text-anchor="start" textLength="6.60" lengthAdjust="spacingAndGlyphs" >600</text><rect x="474.48" y="43.60" width="0.40" height="1.20" fill="#585858" /><rect x="478.70" y="43.60" width="0.40" height="1.20" fill="#585858" /><rect x="482.92" y="43.60" width="0.40" height="1.20" fill="#585858" /><rect x="487.14" y="43.60" width="0.40" height="1.20" fill="#585858" /><rect x="491.37" y="42.60" width="0.40" height="2.20" fill="#585858" /><rect x="495.59" y="43.60" width="0.40" height="1.20" fill="#585858" /><rect x="499.81" y="43.60" width="0.40" height="1.20" fill="#585858" /><rect x="504.03" y="43.60" width="0.40" height="1.20" fill="#585858" /><rect x="508.25" y="43.60" width="0.40" height="1.20" fill="#585858" /><rect x="491.31" y="37.50" width="0.50" height="7.30" fill="#595959" /><text x="492.26" y="44.00" font-size="5.2" fill="#a0a0a0" text-anchor="start" textLength="6.60" lengthAdjust="spacingAndGlyphs" >650</text><rect x="495.59" y="43.60" width="0.40" height="1.20" fill="#585858" /><rect x="499.81" y="43.60" width="0.40" height="1.20" fill="#585858" /><rect x="504.03" y="43.60" width="0.40" height="1.20" fill="#585858" /><rect x="508.25" y="43.60" width="0.40" height="1.20" fill="#585858" /><rect x="512.47" y="42.60" width="0.40" height="2.20" fill="#585858" /><rect x="516.69" y="43.60" width="0.40" height="1.20" fill="#585858" /><rect x="520.91" y="43.60" width="0.40" height="1.20" fill="#585858" /><rect x="525.13" y="43.60" width="0.40" height="1.20" fill="#585858" /><rect x="529.35" y="43.60" width="0.40" height="1.20" fill="#585858" /><rect x="512.42" y="37.50" width="0.50" height="7.30" fill="#595959" /><text x="513.37" y="44.00" font-size="5.2" fill="#a0a0a0" text-anchor="start" textLength="6.60" lengthAdjust="spacingAndGlyphs" >700</text><rect x="516.69" y="43.60" width="0.40" height="1.20" fill="#585858" /><rect x="520.91" y="43.60" width="0.40" height="1.20" fill="#585858" /><rect x="525.13" y="43.60" width="0.40" height="1.20" fill="#585858" /><rect x="529.35" y="43.60" width="0.40" height="1.20" fill="#585858" /><rect x="533.57" y="42.60" width="0.40" height="2.20" fill="#585858" /><rect x="537.80" y="43.60" width="0.40" height="1.20" fill="#585858" /><rect x="542.02" y="43.60" width="0.40" height="1.20" fill="#585858" /><rect x="546.24" y="43.60" width="0.40" height="1.20" fill="#585858" /><rect x="550.46" y="43.60" width="0.40" height="1.20" fill="#585858" /><rect x="533.52" y="37.50" width="0.50" height="7.30" fill="#595959" /><text x="534.48" y="44.00" font-size="5.2" fill="#a0a0a0" text-anchor="start" textLength="6.60" lengthAdjust="spacingAndGlyphs" >750</text><rect x="537.80" y="43.60" width="0.40" height="1.20" fill="#585858" /><rect x="542.02" y="43.60" width="0.40" height="1.20" fill="#585858" /><rect x="546.24" y="43.60" width="0.40" height="1.20" fill="#585858" /><rect x="550.46" y="43.60" width="0.40" height="1.20" fill="#585858" /><rect x="554.68" y="42.60" width="0.40" height="2.20" fill="#585858" /><rect x="558.90" y="43.60" width="0.40" height="1.20" fill="#585858" /><rect x="563.12" y="43.60" width="0.40" height="1.20" fill="#585858" /><rect x="567.34" y="43.60" width="0.40" height="1.20" fill="#585858" /><rect x="571.56" y="43.60" width="0.40" height="1.20" fill="#585858" /><rect x="554.63" y="37.50" width="0.50" height="7.30" fill="#595959" /><text x="555.58" y="44.00" font-size="5.2" fill="#a0a0a0" text-anchor="start" textLength="6.60" lengthAdjust="spacingAndGlyphs" >800</text><rect x="558.90" y="43.60" width="0.40" height="1.20" fill="#585858" /><rect x="563.12" y="43.60" width="0.40" height="1.20" fill="#585858" /><rect x="567.34" y="43.60" width="0.40" height="1.20" fill="#585858" /><rect x="571.56" y="43.60" width="0.40" height="1.20" fill="#585858" /><rect x="575.78" y="42.60" width="0.40" height="2.20" fill="#585858" /><rect x="580.01" y="43.60" width="0.40" height="1.20" fill="#585858" /><rect x="584.23" y="43.60" width="0.40" height="1.20" fill="#585858" /><rect x="588.45" y="43.60" width="0.40" height="1.20" fill="#585858" /><rect x="592.67" y="43.60" width="0.40" height="1.20" fill="#585858" /><rect x="575.73" y="37.50" width="0.50" height="7.30" fill="#595959" /><text x="576.68" y="44.00" font-size="5.2" fill="#a0a0a0" text-anchor="start" textLength="6.60" lengthAdjust="spacingAndGlyphs" >850</text><rect x="580.01" y="43.60" width="0.40" height="1.20" fill="#585858" /><rect x="584.23" y="43.60" width="0.40" height="1.20" fill="#585858" /><rect x="588.45" y="43.60" width="0.40" height="1.20" fill="#585858" /><rect x="592.67" y="43.60" width="0.40" height="1.20" fill="#585858" /><rect x="596.89" y="42.60" width="0.40" height="2.20" fill="#585858" /><rect x="601.11" y="43.60" width="0.40" height="1.20" fill="#585858" /><rect x="605.33" y="43.60" width="0.40" height="1.20" fill="#585858" /><rect x="609.55" y="43.60" width="0.40" height="1.20" fill="#585858" /><rect x="613.77" y="43.60" width="0.40" height="1.20" fill="#585858" /><rect x="596.84" y="37.50" width="0.50" height="7.30" fill="#595959" /><text x="597.79" y="44.00" font-size="5.2" fill="#a0a0a0" text-anchor="start" textLength="6.60" lengthAdjust="spacingAndGlyphs" >900</text><rect x="601.11" y="43.60" width="0.40" height="1.20" fill="#585858" /><rect x="605.33" y="43.60" width="0.40" height="1.20" fill="#585858" /><rect x="609.55" y="43.60" width="0.40" height="1.20" fill="#585858" /><rect x="613.77" y="43.60" width="0.40" height="1.20" fill="#585858" /><rect x="617.99" y="42.60" width="0.40" height="2.20" fill="#585858" /><rect x="622.22" y="43.60" width="0.40" height="1.20" fill="#585858" /><rect x="617.94" y="37.50" width="0.50" height="7.30" fill="#595959" /><text x="618.89" y="44.00" font-size="5.2" fill="#a0a0a0" text-anchor="start" textLength="6.60" lengthAdjust="spacingAndGlyphs" >950</text><rect x="622.22" y="43.60" width="0.40" height="1.20" fill="#585858" /><rect x="17.80" y="45.03" width="7.70" height="0.50" fill="#626262" /><text x="21.80" y="49.58" font-size="4.0" fill="#9a9a9a" text-anchor="middle" >2</text><text x="21.80" y="53.18" font-size="4.0" fill="#9a9a9a" text-anchor="middle" >0</text><text x="21.80" y="56.78" font-size="4.0" fill="#9a9a9a" text-anchor="middle" >0</text><rect x="24.30" y="49.30" width="1.20" height="0.40" fill="#585858" /><rect x="24.30" y="53.52" width="1.20" height="0.40" fill="#585858" /><rect x="24.30" y="57.74" width="1.20" height="0.40" fill="#585858" /><rect x="24.30" y="61.96" width="1.20" height="0.40" fill="#585858" /><rect x="23.30" y="66.18" width="2.20" height="0.40" fill="#585858" /><rect x="24.30" y="70.41" width="1.20" height="0.40" fill="#585858" /><rect x="24.30" y="74.63" width="1.20" height="0.40" fill="#585858" /><rect x="24.30" y="78.85" width="1.20" height="0.40" fill="#585858" /><rect x="24.30" y="83.07" width="1.20" height="0.40" fill="#585858" /><rect x="17.80" y="66.13" width="7.70" height="0.50" fill="#626262" /><text x="21.80" y="70.68" font-size="4.0" fill="#9a9a9a" text-anchor="middle" >1</text><text x="21.80" y="74.28" font-size="4.0" fill="#9a9a9a" text-anchor="middle" >5</text><text x="21.80" y="77.88" font-size="4.0" fill="#9a9a9a" text-anchor="middle" >0</text><rect x="24.30" y="70.41" width="1.20" height="0.40" fill="#585858" /><rect x="24.30" y="74.63" width="1.20" height="0.40" fill="#585858" /><rect x="24.30" y="78.85" width="1.20" height="0.40" fill="#585858" /><rect x="24.30" y="83.07" width="1.20" height="0.40" fill="#585858" /><rect x="23.30" y="87.29" width="2.20" height="0.40" fill="#585858" /><rect x="24.30" y="91.51" width="1.20" height="0.40" fill="#585858" /><rect x="24.30" y="95.73" width="1.20" height="0.40" fill="#585858" /><rect x="24.30" y="99.95" width="1.20" height="0.40" fill="#585858" /><rect x="24.30" y="104.17" width="1.20" height="0.40" fill="#585858" /><rect x="17.80" y="87.24" width="7.70" height="0.50" fill="#626262" /><text x="21.80" y="91.79" font-size="4.0" fill="#9a9a9a" text-anchor="middle" >1</text><text x="21.80" y="95.39" font-size="4.0" fill="#9a9a9a" text-anchor="middle" >0</text><text x="21.80" y="98.99" font-size="4.0" fill="#9a9a9a" text-anchor="middle" >0</text><rect x="24.30" y="91.51" width="1.20" height="0.40" fill="#585858" /><rect x="24.30" y="95.73" width="1.20" height="0.40" fill="#585858" /><rect x="24.30" y="99.95" width="1.20" height="0.40" fill="#585858" /><rect x="24.30" y="104.17" width="1.20" height="0.40" fill="#585858" /><rect x="23.30" y="108.39" width="2.20" height="0.40" fill="#585858" /><rect x="24.30" y="112.62" width="1.20" height="0.40" fill="#585858" /><rect x="24.30" y="116.84" width="1.20" height="0.40" fill="#585858" /><rect x="24.30" y="121.06" width="1.20" height="0.40" fill="#585858" /><rect x="24.30" y="125.28" width="1.20" height="0.40" fill="#585858" /><rect x="17.80" y="108.34" width="7.70" height="0.50" fill="#626262" /><text x="21.80" y="112.89" font-size="4.0" fill="#9a9a9a" text-anchor="middle" >5</text><text x="21.80" y="116.49" font-size="4.0" fill="#9a9a9a" text-anchor="middle" >0</text><rect x="24.30" y="112.62" width="1.20" height="0.40" fill="#585858" /><rect x="24.30" y="116.84" width="1.20" height="0.40" fill="#585858" /><rect x="24.30" y="121.06" width="1.20" height="0.40" fill="#585858" /><rect x="24.30" y="125.28" width="1.20" height="0.40" fill="#585858" /><rect x="23.30" y="129.50" width="2.20" height="0.40" fill="#585858" /><rect x="24.30" y="133.72" width="1.20" height="0.40" fill="#585858" /><rect x="24.30" y="137.94" width="1.20" height="0.40" fill="#585858" /><rect x="24.30" y="142.16" width="1.20" height="0.40" fill="#585858" /><rect x="24.30" y="146.38" width="1.20" height="0.40" fill="#585858" /><rect x="17.80" y="129.45" width="7.70" height="0.50" fill="#626262" /><text x="21.80" y="134.00" font-size="4.0" fill="#9a9a9a" text-anchor="middle" >0</text><rect x="24.30" y="133.72" width="1.20" height="0.40" fill="#585858" /><rect x="24.30" y="137.94" width="1.20" height="0.40" fill="#585858" /><rect x="24.30" y="142.16" width="1.20" height="0.40" fill="#585858" /><rect x="24.30" y="146.38" width="1.20" height="0.40" fill="#585858" /><rect x="23.30" y="150.60" width="2.20" height="0.40" fill="#585858" /><rect x="24.30" y="154.83" width="1.20" height="0.40" fill="#585858" /><rect x="24.30" y="159.05" width="1.20" height="0.40" fill="#585858" /><rect x="24.30" y="163.27" width="1.20" height="0.40" fill="#585858" /><rect x="24.30" y="167.49" width="1.20" height="0.40" fill="#585858" /><rect x="17.80" y="150.55" width="7.70" height="0.50" fill="#626262" /><text x="21.80" y="155.10" font-size="4.0" fill="#9a9a9a" text-anchor="middle" >5</text><text x="21.80" y="158.70" font-size="4.0" fill="#9a9a9a" text-anchor="middle" >0</text><rect x="24.30" y="154.83" width="1.20" height="0.40" fill="#585858" /><rect x="24.30" y="159.05" width="1.20" height="0.40" fill="#585858" /><rect x="24.30" y="163.27" width="1.20" height="0.40" fill="#585858" /><rect x="24.30" y="167.49" width="1.20" height="0.40" fill="#585858" /><rect x="23.30" y="171.71" width="2.20" height="0.40" fill="#585858" /><rect x="24.30" y="175.93" width="1.20" height="0.40" fill="#585858" /><rect x="24.30" y="180.15" width="1.20" height="0.40" fill="#585858" /><rect x="24.30" y="184.37" width="1.20" height="0.40" fill="#585858" /><rect x="24.30" y="188.59" width="1.20" height="0.40" fill="#585858" /><rect x="17.80" y="171.66" width="7.70" height="0.50" fill="#626262" /><text x="21.80" y="176.21" font-size="4.0" fill="#9a9a9a" text-anchor="middle" >1</text><text x="21.80" y="179.81" font-size="4.0" fill="#9a9a9a" text-anchor="middle" >0</text><text x="21.80" y="183.41" font-size="4.0" fill="#9a9a9a" text-anchor="middle" >0</text><rect x="24.30" y="175.93" width="1.20" height="0.40" fill="#585858" /><rect x="24.30" y="180.15" width="1.20" height="0.40" fill="#585858" /><rect x="24.30" y="184.37" width="1.20" height="0.40" fill="#585858" /><rect x="24.30" y="188.59" width="1.20" height="0.40" fill="#585858" /><rect x="23.30" y="192.81" width="2.20" height="0.40" fill="#585858" /><rect x="24.30" y="197.04" width="1.20" height="0.40" fill="#585858" /><rect x="24.30" y="201.26" width="1.20" height="0.40" fill="#585858" /><rect x="24.30" y="205.48" width="1.20" height="0.40" fill="#585858" /><rect x="24.30" y="209.70" width="1.20" height="0.40" fill="#585858" /><rect x="17.80" y="192.76" width="7.70" height="0.50" fill="#626262" /><text x="21.80" y="197.31" font-size="4.0" fill="#9a9a9a" text-anchor="middle" >1</text><text x="21.80" y="200.91" font-size="4.0" fill="#9a9a9a" text-anchor="middle" >5</text><text x="21.80" y="204.51" font-size="4.0" fill="#9a9a9a" text-anchor="middle" >0</text><rect x="24.30" y="197.04" width="1.20" height="0.40" fill="#585858" /><rect x="24.30" y="201.26" width="1.20" height="0.40" fill="#585858" /><rect x="24.30" y="205.48" width="1.20" height="0.40" fill="#585858" /><rect x="24.30" y="209.70" width="1.20" height="0.40" fill="#585858" /><rect x="23.30" y="213.92" width="2.20" height="0.40" fill="#585858" /><rect x="24.30" y="218.14" width="1.20" height="0.40" fill="#585858" /><rect x="24.30" y="222.36" width="1.20" height="0.40" fill="#585858" /><rect x="24.30" y="226.58" width="1.20" height="0.40" fill="#585858" /><rect x="24.30" y="230.80" width="1.20" height="0.40" fill="#585858" /><rect x="17.80" y="213.87" width="7.70" height="0.50" fill="#626262" /><text x="21.80" y="218.42" font-size="4.0" fill="#9a9a9a" text-anchor="middle" >2</text><text x="21.80" y="222.02" font-size="4.0" fill="#9a9a9a" text-anchor="middle" >0</text><text x="21.80" y="225.62" font-size="4.0" fill="#9a9a9a" text-anchor="middle" >0</text><rect x="24.30" y="218.14" width="1.20" height="0.40" fill="#585858" /><rect x="24.30" y="222.36" width="1.20" height="0.40" fill="#585858" /><rect x="24.30" y="226.58" width="1.20" height="0.40" fill="#585858" /><rect x="24.30" y="230.80" width="1.20" height="0.40" fill="#585858" /><rect x="23.30" y="235.03" width="2.20" height="0.40" fill="#585858" /><rect x="24.30" y="239.25" width="1.20" height="0.40" fill="#585858" /><rect x="24.30" y="243.47" width="1.20" height="0.40" fill="#585858" /><rect x="24.30" y="247.69" width="1.20" height="0.40" fill="#585858" /><rect x="24.30" y="251.91" width="1.20" height="0.40" fill="#585858" /><rect x="17.80" y="234.97" width="7.70" height="0.50" fill="#626262" /><text x="21.80" y="239.52" font-size="4.0" fill="#9a9a9a" text-anchor="middle" >2</text><text x="21.80" y="243.12" font-size="4.0" fill="#9a9a9a" text-anchor="middle" >5</text><text x="21.80" y="246.72" font-size="4.0" fill="#9a9a9a" text-anchor="middle" >0</text><rect x="24.30" y="239.25" width="1.20" height="0.40" fill="#585858" /><rect x="24.30" y="243.47" width="1.20" height="0.40" fill="#585858" /><rect x="24.30" y="247.69" width="1.20" height="0.40" fill="#585858" /><rect x="24.30" y="251.91" width="1.20" height="0.40" fill="#585858" /><rect x="23.30" y="256.13" width="2.20" height="0.40" fill="#585858" /><rect x="24.30" y="260.35" width="1.20" height="0.40" fill="#585858" /><rect x="24.30" y="264.57" width="1.20" height="0.40" fill="#585858" /><rect x="24.30" y="268.79" width="1.20" height="0.40" fill="#585858" /><rect x="24.30" y="273.01" width="1.20" height="0.40" fill="#585858" /><rect x="17.80" y="256.08" width="7.70" height="0.50" fill="#626262" /><text x="21.80" y="260.63" font-size="4.0" fill="#9a9a9a" text-anchor="middle" >3</text><text x="21.80" y="264.23" font-size="4.0" fill="#9a9a9a" text-anchor="middle" >0</text><text x="21.80" y="267.83" font-size="4.0" fill="#9a9a9a" text-anchor="middle" >0</text><rect x="24.30" y="260.35" width="1.20" height="0.40" fill="#585858" /><rect x="24.30" y="264.57" width="1.20" height="0.40" fill="#585858" /><rect x="24.30" y="268.79" width="1.20" height="0.40" fill="#585858" /><rect x="24.30" y="273.01" width="1.20" height="0.40" fill="#585858" /><rect x="23.30" y="277.24" width="2.20" height="0.40" fill="#585858" /><rect x="24.30" y="281.46" width="1.20" height="0.40" fill="#585858" /><rect x="24.30" y="285.68" width="1.20" height="0.40" fill="#585858" /><rect x="24.30" y="289.90" width="1.20" height="0.40" fill="#585858" /><rect x="24.30" y="294.12" width="1.20" height="0.40" fill="#585858" /><rect x="17.80" y="277.18" width="7.70" height="0.50" fill="#626262" /><text x="21.80" y="281.73" font-size="4.0" fill="#9a9a9a" text-anchor="middle" >3</text><text x="21.80" y="285.33" font-size="4.0" fill="#9a9a9a" text-anchor="middle" >5</text><text x="21.80" y="288.93" font-size="4.0" fill="#9a9a9a" text-anchor="middle" >0</text><rect x="24.30" y="281.46" width="1.20" height="0.40" fill="#585858" /><rect x="24.30" y="285.68" width="1.20" height="0.40" fill="#585858" /><rect x="24.30" y="289.90" width="1.20" height="0.40" fill="#585858" /><rect x="24.30" y="294.12" width="1.20" height="0.40" fill="#585858" /><rect x="23.30" y="298.34" width="2.20" height="0.40" fill="#585858" /><rect x="24.30" y="302.56" width="1.20" height="0.40" fill="#585858" /><rect x="24.30" y="306.78" width="1.20" height="0.40" fill="#585858" /><rect x="24.30" y="311.00" width="1.20" height="0.40" fill="#585858" /><rect x="24.30" y="315.22" width="1.20" height="0.40" fill="#585858" /><rect x="17.80" y="298.29" width="7.70" height="0.50" fill="#626262" /><text x="21.80" y="302.84" font-size="4.0" fill="#9a9a9a" text-anchor="middle" >4</text><text x="21.80" y="306.44" font-size="4.0" fill="#9a9a9a" text-anchor="middle" >0</text><text x="21.80" y="310.04" font-size="4.0" fill="#9a9a9a" text-anchor="middle" >0</text><rect x="24.30" y="302.56" width="1.20" height="0.40" fill="#585858" /><rect x="24.30" y="306.78" width="1.20" height="0.40" fill="#585858" /><rect x="24.30" y="311.00" width="1.20" height="0.40" fill="#585858" /><rect x="24.30" y="315.22" width="1.20" height="0.40" fill="#585858" /><rect x="23.30" y="319.44" width="2.20" height="0.40" fill="#585858" /><rect x="24.30" y="323.67" width="1.20" height="0.40" fill="#585858" /><rect x="24.30" y="327.89" width="1.20" height="0.40" fill="#585858" /><rect x="24.30" y="332.11" width="1.20" height="0.40" fill="#585858" /><rect x="24.30" y="336.33" width="1.20" height="0.40" fill="#585858" /><rect x="17.80" y="319.39" width="7.70" height="0.50" fill="#626262" /><text x="21.80" y="323.94" font-size="4.0" fill="#9a9a9a" text-anchor="middle" >4</text><text x="21.80" y="327.55" font-size="4.0" fill="#9a9a9a" text-anchor="middle" >5</text><text x="21.80" y="331.14" font-size="4.0" fill="#9a9a9a" text-anchor="middle" >0</text><rect x="24.30" y="323.67" width="1.20" height="0.40" fill="#585858" /><rect x="24.30" y="327.89" width="1.20" height="0.40" fill="#585858" /><rect x="24.30" y="332.11" width="1.20" height="0.40" fill="#585858" /><rect x="24.30" y="336.33" width="1.20" height="0.40" fill="#585858" /><rect x="23.30" y="340.55" width="2.20" height="0.40" fill="#585858" /><rect x="24.30" y="344.77" width="1.20" height="0.40" fill="#585858" /><rect x="24.30" y="348.99" width="1.20" height="0.40" fill="#585858" /><rect x="24.30" y="353.21" width="1.20" height="0.40" fill="#585858" /><rect x="24.30" y="357.43" width="1.20" height="0.40" fill="#585858" /><rect x="17.80" y="340.50" width="7.70" height="0.50" fill="#626262" /><text x="21.80" y="345.05" font-size="4.0" fill="#9a9a9a" text-anchor="middle" >5</text><text x="21.80" y="348.65" font-size="4.0" fill="#9a9a9a" text-anchor="middle" >0</text><text x="21.80" y="352.25" font-size="4.0" fill="#9a9a9a" text-anchor="middle" >0</text><rect x="24.30" y="344.77" width="1.20" height="0.40" fill="#585858" /><rect x="24.30" y="348.99" width="1.20" height="0.40" fill="#585858" /><rect x="24.30" y="353.21" width="1.20" height="0.40" fill="#585858" /><rect x="24.30" y="357.43" width="1.20" height="0.40" fill="#585858" /><rect x="23.30" y="361.66" width="2.20" height="0.40" fill="#585858" /><rect x="24.30" y="365.88" width="1.20" height="0.40" fill="#585858" /><rect x="24.30" y="370.10" width="1.20" height="0.40" fill="#585858" /><rect x="24.30" y="374.32" width="1.20" height="0.40" fill="#585858" /><rect x="24.30" y="378.54" width="1.20" height="0.40" fill="#585858" /><rect x="17.80" y="361.60" width="7.70" height="0.50" fill="#626262" /><text x="21.80" y="366.15" font-size="4.0" fill="#9a9a9a" text-anchor="middle" >5</text><text x="21.80" y="369.75" font-size="4.0" fill="#9a9a9a" text-anchor="middle" >5</text><text x="21.80" y="373.35" font-size="4.0" fill="#9a9a9a" text-anchor="middle" >0</text><rect x="24.30" y="365.88" width="1.20" height="0.40" fill="#585858" /><rect x="24.30" y="370.10" width="1.20" height="0.40" fill="#585858" /><rect x="24.30" y="374.32" width="1.20" height="0.40" fill="#585858" /><rect x="24.30" y="378.54" width="1.20" height="0.40" fill="#585858" /><rect x="23.30" y="382.76" width="2.20" height="0.40" fill="#585858" /><rect x="24.30" y="386.98" width="1.20" height="0.40" fill="#585858" /><rect x="24.30" y="391.20" width="1.20" height="0.40" fill="#585858" /><rect x="24.30" y="395.42" width="1.20" height="0.40" fill="#585858" /><rect x="24.30" y="399.64" width="1.20" height="0.40" fill="#585858" /><rect x="17.80" y="382.71" width="7.70" height="0.50" fill="#626262" /><text x="21.80" y="387.26" font-size="4.0" fill="#9a9a9a" text-anchor="middle" >6</text><text x="21.80" y="390.86" font-size="4.0" fill="#9a9a9a" text-anchor="middle" >0</text><text x="21.80" y="394.46" font-size="4.0" fill="#9a9a9a" text-anchor="middle" >0</text><rect x="24.30" y="386.98" width="1.20" height="0.40" fill="#585858" /><rect x="24.30" y="391.20" width="1.20" height="0.40" fill="#585858" /><rect x="24.30" y="395.42" width="1.20" height="0.40" fill="#585858" /><rect x="24.30" y="399.64" width="1.20" height="0.40" fill="#585858" /><rect x="23.30" y="403.87" width="2.20" height="0.40" fill="#585858" /><rect x="24.30" y="408.09" width="1.20" height="0.40" fill="#585858" /><rect x="24.30" y="412.31" width="1.20" height="0.40" fill="#585858" /><rect x="24.30" y="416.53" width="1.20" height="0.40" fill="#585858" /><rect x="24.30" y="420.75" width="1.20" height="0.40" fill="#585858" /><rect x="17.80" y="403.81" width="7.70" height="0.50" fill="#626262" /><text x="21.80" y="408.37" font-size="4.0" fill="#9a9a9a" text-anchor="middle" >6</text><text x="21.80" y="411.97" font-size="4.0" fill="#9a9a9a" text-anchor="middle" >5</text><text x="21.80" y="415.56" font-size="4.0" fill="#9a9a9a" text-anchor="middle" >0</text><rect x="24.30" y="408.09" width="1.20" height="0.40" fill="#585858" /><rect x="24.30" y="412.31" width="1.20" height="0.40" fill="#585858" /><rect x="24.30" y="416.53" width="1.20" height="0.40" fill="#585858" /><rect x="24.30" y="420.75" width="1.20" height="0.40" fill="#585858" /><rect x="23.30" y="424.97" width="2.20" height="0.40" fill="#585858" /><rect x="24.30" y="429.19" width="1.20" height="0.40" fill="#585858" /><rect x="17.80" y="424.92" width="7.70" height="0.50" fill="#626262" /><text x="21.80" y="429.47" font-size="4.0" fill="#9a9a9a" text-anchor="middle" >7</text><text x="21.80" y="433.07" font-size="4.0" fill="#9a9a9a" text-anchor="middle" >0</text><text x="21.80" y="436.67" font-size="4.0" fill="#9a9a9a" text-anchor="middle" >0</text><rect x="24.30" y="429.19" width="1.20" height="0.40" fill="#585858" /><rect x="252.00" y="38.10" width="0.90" height="5.10" fill="#a8a8a8" /><rect x="19.00" y="295.00" width="5.20" height="0.90" fill="#a8a8a8" /><rect x="17.80" y="37.50" width="7.70" height="7.30" fill="#4c4c4c" /><rect x="17.80" y="44.60" width="607.00" height="0.30" fill="#454545" /><rect x="25.30" y="37.50" width="0.30" height="394.00" fill="#454545" /><text x="21.00" y="436.00" font-size="6.0" fill="#dcdcdc" text-anchor="start" textLength="19.00" lengthAdjust="spacingAndGlyphs" >196.37%</text><text x="48.80" y="436.00" font-size="6.0" fill="#d0d0d0" text-anchor="start" textLength="8.60" lengthAdjust="spacingAndGlyphs" >512</text><g fill="#d0d0d0" opacity="1.0"><rect x="58.64" y="431.40" width="4.32" height="4.80" opacity="0.5"/><rect x="58.80" y="433.15" width="3.91" height="0.96" opacity="0.8"/><rect x="59.34" y="433.29" width="3.90" height="0.96" opacity="0.8"/><rect x="59.24" y="434.94" width="3.18" height="0.96" opacity="0.8"/><rect x="63.44" y="431.40" width="4.32" height="4.80" opacity="0.5"/><rect x="63.64" y="431.93" width="0.82" height="2.99" opacity="0.8"/><rect x="63.65" y="434.52" width="3.07" height="0.96" opacity="0.8"/><rect x="65.37" y="431.79" width="0.82" height="3.64" opacity="0.8"/></g><text x="69.50" y="436.00" font-size="6.0" fill="#d0d0d0" text-anchor="start" textLength="12.60" lengthAdjust="spacingAndGlyphs" >x 512</text><g fill="#d0d0d0" opacity="1.0"><rect x="83.25" y="431.40" width="4.41" height="4.80" opacity="0.5"/><rect x="85.97" y="431.53" width="0.83" height="3.72" opacity="0.8"/><rect x="84.19" y="432.64" width="3.20" height="0.96" opacity="0.8"/><rect x="85.89" y="432.49" width="0.83" height="3.49" opacity="0.8"/><rect x="88.15" y="431.40" width="4.41" height="4.80" opacity="0.5"/><rect x="89.95" y="432.01" width="0.83" height="3.97" opacity="0.8"/><rect x="88.73" y="433.56" width="4.05" height="0.96" opacity="0.8"/><rect x="91.17" y="432.53" width="0.83" height="3.14" opacity="0.8"/></g><text x="94.00" y="436.00" font-size="6.0" fill="#d0d0d0" text-anchor="start" textLength="17.00" lengthAdjust="spacingAndGlyphs" >(72 ppi)</text><path d="M118.8 432.4 L120.2 433.8 L118.8 435.2" stroke="#c0c0c0" stroke-width="0.6" fill="none"/><path d="M645.2 26.7 L643.8 27.75 L645.2 28.8Z M647.2 26.7 L645.8 27.75 L647.2 28.8Z" fill="#bdbdbd"/><path d="M763 26.7 L764.4 27.75 L763 28.8Z M765 26.7 L766.4 27.75 L765 28.8Z" fill="#bdbdbd"/><circle cx="641.1" cy="40" r="3.6" fill="none" stroke="#d6d6d6" stroke-width="0.65"/><rect x="640.65" y="38.3" width="0.9" height="3.4" fill="#d6d6d6"/><rect x="635.50" y="49.20" width="11.40" height="0.50" fill="#4a4a4a" /><g fill="#d6d6d6"><rect x="637.6" y="54.2" width="1.6" height="0.7"/><rect x="637.6" y="55.8" width="1" height="0.7"/><rect x="637.6" y="57.2" width="1.6" height="0.7"/></g><path d="M639.6 62 L645.4 55.6" stroke="#d6d6d6" stroke-width="1"/><path d="M638.6 63.2 L639.2 60.6 L640.8 62Z" fill="#d6d6d6"/><g fill="#d6d6d6"><rect x="637.4" y="66.2" width="7.2" height="0.8"/><rect x="637.4" y="69.4" width="5" height="0.8"/><rect x="637.6" y="65.6" width="1.6" height="2"/></g><path d="M646.2 65.8 V71.6 L642.6 68.8Z" fill="#d6d6d6"/><rect x="635.50" y="80.00" width="11.40" height="0.50" fill="#4a4a4a" /><g fill="#d6d6d6"><rect x="637.6" y="83.4" width="1.6" height="1.2"/><rect x="637.6" y="85.6" width="1.6" height="1.2"/><rect x="637.6" y="88" width="1.6" height="1.6"/></g><path d="M640.6 83.6 H644.2 Q645.6 84.6 644.4 86.4 Q646.2 87.4 644.8 89.6 H640.6" stroke="#d6d6d6" stroke-width="0.9" fill="none"/><path d="M637.8 96 L645.2 99.4 L637.8 102.8Z" fill="#d6d6d6"/><rect x="684.40" y="30.80" width="0.50" height="12.00" fill="#3d3d3d" /><rect x="701.80" y="30.80" width="0.50" height="12.00" fill="#3d3d3d" /><rect x="719.20" y="30.80" width="0.50" height="12.00" fill="#3d3d3d" /><rect x="667.20" y="30.80" width="0.50" height="12.00" fill="#3d3d3d" /><g fill="#ececec" opacity="1.0"><rect x="653.85" y="33.70" width="4.50" height="5.00" opacity="0.5"/><rect x="657.16" y="34.75" width="0.85" height="3.02" opacity="0.8"/><rect x="653.94" y="35.61" width="2.73" height="1.00" opacity="0.8"/><rect x="654.83" y="36.46" width="4.04" height="1.00" opacity="0.8"/><rect x="658.85" y="33.70" width="4.50" height="5.00" opacity="0.5"/><rect x="659.68" y="36.64" width="2.54" height="1.00" opacity="0.8"/><rect x="662.24" y="33.97" width="0.85" height="4.66" opacity="0.8"/><rect x="660.09" y="35.78" width="3.91" height="1.00" opacity="0.8"/></g><g fill="#b8b8b8" opacity="1.0"><rect x="670.85" y="33.70" width="4.50" height="5.00" opacity="0.5"/><rect x="671.49" y="35.57" width="2.93" height="1.00" opacity="0.8"/><rect x="671.75" y="35.14" width="2.29" height="1.00" opacity="0.8"/><rect x="672.48" y="33.72" width="0.85" height="3.41" opacity="0.8"/><rect x="675.85" y="33.70" width="4.50" height="5.00" opacity="0.5"/><rect x="677.72" y="33.78" width="0.85" height="4.72" opacity="0.8"/><rect x="679.26" y="33.83" width="0.85" height="3.28" opacity="0.8"/><rect x="676.19" y="36.87" width="2.51" height="1.00" opacity="0.8"/></g><g fill="#b8b8b8" opacity="1.0"><rect x="688.25" y="33.70" width="4.50" height="5.00" opacity="0.5"/><rect x="689.27" y="37.37" width="2.77" height="1.00" opacity="0.8"/><rect x="688.96" y="37.40" width="3.65" height="1.00" opacity="0.8"/><rect x="689.11" y="34.17" width="3.10" height="1.00" opacity="0.8"/><rect x="693.25" y="33.70" width="4.50" height="5.00" opacity="0.5"/><rect x="694.04" y="37.47" width="3.85" height="1.00" opacity="0.8"/><rect x="693.33" y="37.16" width="3.98" height="1.00" opacity="0.8"/><rect x="693.94" y="35.22" width="4.10" height="1.00" opacity="0.8"/></g><g fill="#b8b8b8" opacity="1.0"><rect x="706.05" y="33.70" width="4.50" height="5.00" opacity="0.5"/><rect x="706.71" y="34.43" width="2.73" height="1.00" opacity="0.8"/><rect x="706.11" y="34.56" width="2.65" height="1.00" opacity="0.8"/><rect x="707.00" y="35.09" width="2.83" height="1.00" opacity="0.8"/><rect x="711.05" y="33.70" width="4.50" height="5.00" opacity="0.5"/><rect x="711.80" y="34.13" width="0.85" height="2.79" opacity="0.8"/><rect x="711.97" y="34.01" width="3.35" height="1.00" opacity="0.8"/><rect x="712.22" y="35.73" width="2.46" height="1.00" opacity="0.8"/></g><rect x="762" y="34.0" width="4.4" height="3.9" fill="#7c7c7c"/><rect x="658.7" y="51.1" width="8.1" height="8.1" fill="#000" stroke="#dcdcdc" stroke-width="0.6"/><rect x="654.7" y="46.8" width="7.6" height="8" fill="#ffffff" stroke="#666" stroke-width="0.3"/><defs><linearGradient id="gw" x1="0" y1="0" x2="1" y2="0"><stop offset="0" stop-color="#fff"/><stop offset="0.5" stop-color="#ff7070"/><stop offset="0.8" stop-color="#ff1414"/><stop offset="1" stop-color="#f00"/></linearGradient><linearGradient id="gk" x1="0" y1="0" x2="0" y2="1"><stop offset="0" stop-color="#000" stop-opacity="0"/><stop offset="1" stop-color="#000" stop-opacity="1"/></linearGradient><linearGradient id="hue" x1="0" y1="0" x2="0" y2="1"><stop offset="0" stop-color="#f00"/><stop offset="0.1667" stop-color="#f0f"/><stop offset="0.3333" stop-color="#00f"/><stop offset="0.5" stop-color="#0ff"/><stop offset="0.6667" stop-color="#0f0"/><stop offset="0.8333" stop-color="#ff0"/><stop offset="1" stop-color="#f00"/></linearGradient></defs><rect x="669.8" y="45.2" width="76.4" height="105.8" fill="url(#gw)"/><rect x="669.8" y="45.2" width="76.4" height="105.8" fill="url(#gk)"/><rect x="669.8" y="151" width="76.4" height="0.5" fill="#000"/><circle cx="670.6" cy="46.2" r="0.9" fill="#fff" stroke="#666" stroke-width="0.3"/><rect x="753.4" y="45.2" width="8.4" height="106.3" fill="url(#hue)"/><path d="M749.6 149.4 L752.4 151 L749.6 152.6Z" fill="#e8e8e8"/><rect x="650.40" y="159.10" width="118.60" height="0.50" fill="#3d3d3d" /><rect x="668.00" y="159.50" width="0.50" height="12.10" fill="#3d3d3d" /><rect x="685.60" y="159.50" width="0.50" height="12.10" fill="#3d3d3d" /><rect x="702.00" y="159.50" width="0.50" height="12.10" fill="#3d3d3d" /><g fill="#b8b8b8" opacity="1.0"><rect x="653.86" y="163.50" width="4.68" height="5.00" opacity="0.5"/><rect x="655.52" y="164.12" width="0.88" height="4.38" opacity="0.8"/><rect x="654.75" y="165.65" width="4.38" height="1.00" opacity="0.8"/><rect x="654.78" y="166.87" width="3.66" height="1.00" opacity="0.8"/></g><g fill="#b8b8b8" opacity="1.0"><rect x="671.44" y="163.50" width="4.32" height="5.00" opacity="0.5"/><rect x="671.51" y="165.05" width="2.41" height="1.00" opacity="0.8"/><rect x="671.75" y="166.53" width="2.47" height="1.00" opacity="0.8"/><rect x="672.48" y="166.90" width="3.45" height="1.00" opacity="0.8"/><rect x="676.24" y="163.50" width="4.32" height="5.00" opacity="0.5"/><rect x="676.59" y="164.66" width="3.04" height="1.00" opacity="0.8"/><rect x="676.56" y="165.42" width="4.01" height="1.00" opacity="0.8"/><rect x="678.14" y="163.81" width="0.82" height="4.68" opacity="0.8"/></g><g fill="#ececec" opacity="1.0"><rect x="689.44" y="163.50" width="4.32" height="5.00" opacity="0.5"/><rect x="689.44" y="165.09" width="2.89" height="1.00" opacity="0.8"/><rect x="689.68" y="165.64" width="3.13" height="1.00" opacity="0.8"/><rect x="689.55" y="164.74" width="2.93" height="1.00" opacity="0.8"/><rect x="694.24" y="163.50" width="4.32" height="5.00" opacity="0.5"/><rect x="694.61" y="163.83" width="2.61" height="1.00" opacity="0.8"/><rect x="696.09" y="164.44" width="0.82" height="4.06" opacity="0.8"/><rect x="697.21" y="163.99" width="0.82" height="3.40" opacity="0.8"/></g><rect x="762" y="163.2" width="4.4" height="3.9" fill="#7c7c7c"/><g fill="#cfcfcf" opacity="1.0"><rect x="653.74" y="176.20" width="4.32" height="5.00" opacity="0.5"/><rect x="654.36" y="177.11" width="0.82" height="4.04" opacity="0.8"/><rect x="654.81" y="179.58" width="3.36" height="1.00" opacity="0.8"/><rect x="656.50" y="176.37" width="0.82" height="3.80" opacity="0.8"/><rect x="658.54" y="176.20" width="4.32" height="5.00" opacity="0.5"/><rect x="661.37" y="177.21" width="0.82" height="3.99" opacity="0.8"/><rect x="661.56" y="177.05" width="0.82" height="4.14" opacity="0.8"/><rect x="658.70" y="176.57" width="2.85" height="1.00" opacity="0.8"/><rect x="663.34" y="176.20" width="4.32" height="5.00" opacity="0.5"/><rect x="664.01" y="179.58" width="3.37" height="1.00" opacity="0.8"/><rect x="665.67" y="176.81" width="0.82" height="2.76" opacity="0.8"/><rect x="665.89" y="176.83" width="0.82" height="3.82" opacity="0.8"/><rect x="668.14" y="176.20" width="4.32" height="5.00" opacity="0.5"/><rect x="668.50" y="177.12" width="0.82" height="3.25" opacity="0.8"/><rect x="669.02" y="177.45" width="2.55" height="1.00" opacity="0.8"/><rect x="671.42" y="176.82" width="0.82" height="3.52" opacity="0.8"/></g><circle cx="674.8" cy="188.9" r="2" fill="none" stroke="#d4d4d4" stroke-width="0.8"/><path d="M674.8 186.9 A2 2 0 0 1 674.8 190.9Z" fill="#d4d4d4"/><g stroke="#d4d4d4" stroke-width="0.5"><line x1="677.60" y1="188.90" x2="678.40" y2="188.90"/><line x1="676.78" y1="190.88" x2="677.35" y2="191.45"/><line x1="674.80" y1="191.70" x2="674.80" y2="192.50"/><line x1="672.82" y1="190.88" x2="672.25" y2="191.45"/><line x1="672.00" y1="188.90" x2="671.20" y2="188.90"/><line x1="672.82" y1="186.92" x2="672.25" y2="186.35"/><line x1="674.80" y1="186.10" x2="674.80" y2="185.30"/><line x1="676.78" y1="186.92" x2="677.35" y2="186.35"/></g><path d="M680.8 191.1 L681 188.70000000000002 L682 189.3 L682.8 187.3 L683.8 188.9 L684.6 186.3 L685.6 188.5 L686.4 186.9 L687.4 188.70000000000002 L688.2 187.5 L689.2 189.5 L689.2 191.1Z" fill="#d4d4d4"/><rect x="691.8000000000001" y="186.0" width="6.8" height="5.8" fill="#d4d4d4" opacity="0.55" stroke="#d4d4d4" stroke-width="0.6"/><path d="M691.8000000000001 191.8 Q694.2 186.9 698.6 186.0" stroke="#555" stroke-width="0.7" fill="none"/><rect x="702.0" y="186.1" width="6.8" height="5.6" fill="#d4d4d4" stroke="#d4d4d4" stroke-width="0.7"/><path d="M703.0 187.9 H705.4 M704.1999999999999 186.9 V188.9 M706.0 190.1 H708.0" stroke="#555" stroke-width="0.6"/><path d="M712.7 186.3 H718.7 L715.7 191.9Z" fill="none" stroke="#d4d4d4" stroke-width="0.8"/><rect x="666.6" y="197.7" width="6" height="6" fill="none" stroke="#d4d4d4" stroke-width="0.6"/><rect x="666.6" y="197.7" width="2.4" height="6" fill="#d4d4d4"/><path d="M675.9 203.1 L677.5 200.1 L678.9 203.1Z M679.9 203.1 L681.5 200.1 L683.1 203.1Z M678.1 200.29999999999998 L679.5 197.7 L680.9 200.29999999999998Z" fill="#d4d4d4"/><rect x="687.2" y="197.7" width="6" height="6" fill="none" stroke="#d4d4d4" stroke-width="0.6"/><rect x="690.2" y="197.7" width="3" height="6" fill="#d4d4d4"/><rect x="697.5" y="198.89999999999998" width="5.6" height="4.4" rx="0.6" fill="#d4d4d4"/><circle cx="700.3000000000001" cy="201.1" r="1.1" fill="#555"/><circle cx="703.3000000000001" cy="203.1" r="1.1" fill="#d4d4d4"/><circle cx="710.6" cy="199.7" r="2" fill="none" stroke="#d4d4d4" stroke-width="0.8"/><circle cx="709.0" cy="202.1" r="2" fill="none" stroke="#d4d4d4" stroke-width="0.8"/><circle cx="712.2" cy="202.1" r="2" fill="none" stroke="#d4d4d4" stroke-width="0.8"/><g fill="#d4d4d4"><rect x="718.0" y="197.89999999999998" width="1.2" height="5.6"/><rect x="720.6" y="197.89999999999998" width="1.2" height="5.6"/><rect x="723.2" y="197.89999999999998" width="1.2" height="5.6"/><rect x="717.8000000000001" y="197.89999999999998" width="6.8" height="0.8"/></g><rect x="671.5999999999999" y="208.5" width="6.4" height="6.4" fill="none" stroke="#d4d4d4" stroke-width="0.7"/><path d="M672.8 214.1 Q672.8 210.7 675.1999999999999 210.7 M675.1999999999999 210.7 V213.7" stroke="#d4d4d4" stroke-width="0.8" fill="none"/><rect x="681.8" y="208.5" width="6.4" height="6.4" fill="none" stroke="#d4d4d4" stroke-width="0.7"/><path d="M681.8 213.7 L688.2 209.7 V212.7 L684 214.89999999999998Z" fill="#d4d4d4" opacity="0.8"/><rect x="692.0" y="208.5" width="6.4" height="6.4" fill="none" stroke="#d4d4d4" stroke-width="0.7"/><path d="M692.0 214.89999999999998 L698.4000000000001 208.5 V214.89999999999998Z" fill="#d4d4d4"/><rect x="702.1999999999999" y="208.5" width="6.4" height="6.4" fill="none" stroke="#d4d4d4" stroke-width="0.7"/><path d="M702.1999999999999 208.5 L705.4 211.7 L708.6 208.5 V214.89999999999998 H702.1999999999999Z" fill="#d4d4d4" opacity="0.85"/><defs><linearGradient id="gm716" x1="0" x2="1"><stop offset="0" stop-color="#333"/><stop offset="1" stop-color="#eee"/></linearGradient></defs><rect x="712.8" y="208.5" width="6.4" height="6.4" fill="url(#gm716)" stroke="#d4d4d4" stroke-width="0.7"/><rect x="650.40" y="302.00" width="118.60" height="0.50" fill="#3d3d3d" /><rect x="667.20" y="302.40" width="0.50" height="12.30" fill="#3d3d3d" /><rect x="684.50" y="302.40" width="0.50" height="12.30" fill="#3d3d3d" /><rect x="702.30" y="302.40" width="0.50" height="12.30" fill="#3d3d3d" /><g fill="#ececec" opacity="1.0"><rect x="653.85" y="305.90" width="4.50" height="5.00" opacity="0.5"/><rect x="654.81" y="308.71" width="3.48" height="1.00" opacity="0.8"/><rect x="654.26" y="306.08" width="0.85" height="3.26" opacity="0.8"/><rect x="655.02" y="306.61" width="0.85" height="2.77" opacity="0.8"/><rect x="658.85" y="305.90" width="4.50" height="5.00" opacity="0.5"/><rect x="659.69" y="307.16" width="3.63" height="1.00" opacity="0.8"/><rect x="659.97" y="306.55" width="0.85" height="3.68" opacity="0.8"/><rect x="659.97" y="306.59" width="2.65" height="1.00" opacity="0.8"/></g><g fill="#b8b8b8" opacity="1.0"><rect x="670.85" y="305.90" width="4.50" height="5.00" opacity="0.5"/><rect x="674.14" y="305.92" width="0.85" height="3.67" opacity="0.8"/><rect x="674.24" y="306.46" width="0.85" height="3.29" opacity="0.8"/><rect x="671.11" y="309.70" width="3.41" height="1.00" opacity="0.8"/><rect x="675.85" y="305.90" width="4.50" height="5.00" opacity="0.5"/><rect x="677.04" y="308.12" width="2.52" height="1.00" opacity="0.8"/><rect x="677.70" y="307.01" width="0.85" height="3.89" opacity="0.8"/><rect x="676.46" y="309.52" width="2.30" height="1.00" opacity="0.8"/></g><g fill="#b8b8b8" opacity="1.0"><rect x="688.25" y="305.90" width="4.50" height="5.00" opacity="0.5"/><rect x="688.81" y="307.99" width="2.85" height="1.00" opacity="0.8"/><rect x="688.65" y="307.44" width="3.93" height="1.00" opacity="0.8"/><rect x="689.30" y="308.97" width="2.49" height="1.00" opacity="0.8"/><rect x="693.25" y="305.90" width="4.50" height="5.00" opacity="0.5"/><rect x="695.79" y="307.03" width="0.85" height="3.33" opacity="0.8"/><rect x="694.50" y="307.62" width="3.43" height="1.00" opacity="0.8"/><rect x="693.59" y="307.76" width="2.35" height="1.00" opacity="0.8"/></g><rect x="762" y="306.4" width="4.4" height="3.9" fill="#7c7c7c"/><rect x="652.60" y="319.00" width="30.10" height="6.90" fill="#474747" /><circle cx="656.6" cy="322.1" r="1.5" fill="none" stroke="#e0e0e0" stroke-width="0.6"/><path d="M657.7 323.2 L658.9 324.4" stroke="#e0e0e0" stroke-width="0.6"/><g fill="#e6e6e6" opacity="1.0"><rect x="661.04" y="320.00" width="4.32" height="5.00" opacity="0.5"/><rect x="661.38" y="323.38" width="3.96" height="1.00" opacity="0.8"/><rect x="661.65" y="321.25" width="2.52" height="1.00" opacity="0.8"/><rect x="662.10" y="323.84" width="3.72" height="1.00" opacity="0.8"/><rect x="665.84" y="320.00" width="4.32" height="5.00" opacity="0.5"/><rect x="668.92" y="321.18" width="0.82" height="3.82" opacity="0.8"/><rect x="666.14" y="320.92" width="0.82" height="3.65" opacity="0.8"/><rect x="668.06" y="320.36" width="0.82" height="2.85" opacity="0.8"/></g><path d="M679.4 321.8 L680.4 322.8 L681.4 321.8" stroke="#c8c8c8" stroke-width="0.6" fill="none"/><rect x="690.3" y="320.6" width="4.8" height="4.2" fill="none" stroke="#d8d8d8" stroke-width="0.6"/><path d="M690.6 324.6 L692 322.6 L693.2 323.6 L694.8 322.2 V324.6Z" fill="#d8d8d8"/><circle cx="702.8" cy="322.8" r="2.4" fill="none" stroke="#d8d8d8" stroke-width="0.6"/><path d="M701.1 324.5 A2.4 2.4 0 0 0 704.5 321.1Z" fill="#d8d8d8"/><path d="M710.8 320.6 H715.6 V321.4 M710.8 320.6 V321.4 M713.2 320.6 V325 M712.2 325 H714.2" stroke="#d8d8d8" stroke-width="0.7" fill="none"/><path d="M721 320.8 H726 M721 324.8 H726 M721.6 320.2 V325.4 M725.4 320.2 V325.4" stroke="#d8d8d8" stroke-width="0.7" fill="none"/><rect x="732" y="322.2" width="3.8" height="3" fill="#d8d8d8"/><path d="M733.4 322 V320.4 H735 L736.2 321.6 V322" fill="none" stroke="#d8d8d8" stroke-width="0.5"/><rect x="743.3" y="320" width="3.8" height="6.6" rx="1.9" fill="#3a3a3a"/><circle cx="745.2" cy="321.9" r="1.75" fill="#e8e8e8"/><rect x="650.40" y="328.20" width="118.60" height="0.50" fill="#484848" /><rect x="652.60" y="331.80" width="46.50" height="6.40" fill="#4e4e4e" /><g fill="#7c7c7c" opacity="1.0"><rect x="655.04" y="332.60" width="4.32" height="4.80" opacity="0.5"/><rect x="655.59" y="333.17" width="0.82" height="3.30" opacity="0.8"/><rect x="656.21" y="335.50" width="2.66" height="0.96" opacity="0.8"/><rect x="656.15" y="333.27" width="0.82" height="3.40" opacity="0.8"/><rect x="659.84" y="332.60" width="4.32" height="4.80" opacity="0.5"/><rect x="660.09" y="333.42" width="3.90" height="0.96" opacity="0.8"/><rect x="660.93" y="333.63" width="4.07" height="0.96" opacity="0.8"/><rect x="660.07" y="333.34" width="2.33" height="0.96" opacity="0.8"/></g><path d="M696.4 334.4 L697.3 335.3 L698.2 334.4" stroke="#7c7c7c" stroke-width="0.5" fill="none"/><g fill="#7c7c7c" opacity="1.0"><rect x="702.04" y="332.60" width="4.41" height="4.80" opacity="0.5"/><rect x="702.34" y="333.17" width="2.71" height="0.96" opacity="0.8"/><rect x="705.10" y="333.50" width="0.83" height="3.43" opacity="0.8"/><rect x="702.51" y="334.73" width="2.87" height="0.96" opacity="0.8"/><rect x="706.94" y="332.60" width="4.41" height="4.80" opacity="0.5"/><rect x="708.13" y="333.84" width="2.45" height="0.96" opacity="0.8"/><rect x="709.16" y="333.64" width="0.83" height="3.05" opacity="0.8"/><rect x="707.43" y="333.73" width="3.08" height="0.96" opacity="0.8"/><rect x="711.84" y="332.60" width="4.41" height="4.80" opacity="0.5"/><rect x="714.78" y="333.65" width="0.83" height="2.68" opacity="0.8"/><rect x="712.94" y="335.39" width="3.13" height="0.96" opacity="0.8"/><rect x="711.99" y="333.07" width="0.83" height="4.33" opacity="0.8"/><rect x="716.75" y="332.60" width="4.41" height="4.80" opacity="0.5"/><rect x="719.70" y="333.77" width="0.83" height="3.12" opacity="0.8"/><rect x="717.38" y="333.40" width="3.54" height="0.96" opacity="0.8"/><rect x="719.26" y="333.38" width="0.83" height="4.02" opacity="0.8"/></g><rect x="721.80" y="333.60" width="0.70" height="0.70" fill="#7c7c7c" /><rect x="721.80" y="336.00" width="0.70" height="0.70" fill="#7c7c7c" /><rect x="723.90" y="332.20" width="15.50" height="6.40" fill="#4e4e4e" /><text x="725.00" y="337.40" font-size="5.4" fill="#7c7c7c" text-anchor="start" textLength="12.40" lengthAdjust="spacingAndGlyphs" >100%</text><rect x="741.00" y="332.20" width="5.20" height="6.40" fill="#4e4e4e" /><path d="M742.7 334.8 L743.6 335.7 L744.5 334.8" stroke="#7c7c7c" stroke-width="0.5" fill="none"/><rect x="650.40" y="341.20" width="118.60" height="0.50" fill="#484848" /><g fill="#7c7c7c" opacity="1.0"><rect x="652.81" y="345.20" width="3.69" height="4.80" opacity="0.5"/><rect x="652.85" y="347.43" width="3.13" height="0.96" opacity="0.8"/><rect x="653.47" y="348.75" width="2.34" height="0.96" opacity="0.8"/><rect x="653.46" y="346.35" width="2.99" height="0.96" opacity="0.8"/><rect x="656.91" y="345.20" width="3.69" height="4.80" opacity="0.5"/><rect x="657.44" y="345.69" width="2.80" height="0.96" opacity="0.8"/><rect x="657.52" y="346.24" width="1.86" height="0.96" opacity="0.8"/><rect x="657.89" y="347.10" width="2.90" height="0.96" opacity="0.8"/></g><rect x="661.60" y="346.20" width="0.70" height="0.70" fill="#7c7c7c" /><rect x="661.60" y="348.60" width="0.70" height="0.70" fill="#7c7c7c" /><g fill="#7c7c7c"><rect x="666.6" y="345.6" width="1.4" height="1.4"/><rect x="669" y="345.6" width="1.4" height="1.4"/><rect x="667.8" y="346.8" width="1.4" height="1.4"/><rect x="666.6" y="348" width="1.4" height="1.4"/><rect x="669" y="348" width="1.4" height="1.4"/></g><path d="M676 350.2 L680.2 345" stroke="#7c7c7c" stroke-width="0.8"/><path d="M675.6 350.6 L676.2 348.8 L677.3 349.7Z" fill="#7c7c7c"/><path d="M687.3 344.4 V350.6 M684.2 347.5 H690.4" stroke="#7c7c7c" stroke-width="0.6"/><path d="M687.3 344 l-0.9 1.1 h1.8Z M687.3 351 l-0.9 -1.1 h1.8Z M683.8 347.5 l1.1 -0.9 v1.8Z M690.8 347.5 l-1.1 -0.9 v1.8Z" fill="#7c7c7c"/><path d="M694.6 345 H697.8 L699.2 346.4 V350 H694.6Z M694 345 H694.6 M694.6 344.4 V345" stroke="#7c7c7c" stroke-width="0.6" fill="none"/><rect x="704.2" y="347" width="3.8" height="3.2" fill="#7c7c7c"/><path d="M704.9 347 V346 A1.2 1.2 0 0 1 707.3 346 V347" stroke="#7c7c7c" stroke-width="0.6" fill="none"/><g fill="#7c7c7c" opacity="1.0"><rect x="711.63" y="345.20" width="4.14" height="4.80" opacity="0.5"/><rect x="713.23" y="345.48" width="0.78" height="3.11" opacity="0.8"/><rect x="713.94" y="345.57" width="0.78" height="2.68" opacity="0.8"/><rect x="712.11" y="347.87" width="2.54" height="0.96" opacity="0.8"/><rect x="716.23" y="345.20" width="4.14" height="4.80" opacity="0.5"/><rect x="719.22" y="345.47" width="0.78" height="2.71" opacity="0.8"/><rect x="717.01" y="346.95" width="2.43" height="0.96" opacity="0.8"/><rect x="718.65" y="345.81" width="0.78" height="3.03" opacity="0.8"/></g><rect x="721.20" y="346.20" width="0.70" height="0.70" fill="#7c7c7c" /><rect x="721.20" y="348.60" width="0.70" height="0.70" fill="#7c7c7c" /><rect x="723.90" y="344.60" width="15.50" height="6.40" fill="#4e4e4e" /><text x="725.00" y="349.80" font-size="5.4" fill="#7c7c7c" text-anchor="start" textLength="12.40" lengthAdjust="spacingAndGlyphs" >100%</text><rect x="741.00" y="344.60" width="5.20" height="6.40" fill="#4e4e4e" /><path d="M742.7 347.2 L743.6 348.1 L744.5 347.2" stroke="#7c7c7c" stroke-width="0.5" fill="none"/><rect x="649.40" y="354.60" width="113.00" height="72.80" fill="#4c4c4c" /><rect x="762.30" y="354.60" width="6.70" height="72.80" fill="#4b4b4b" /><rect x="649.40" y="354.60" width="113.00" height="17.50" fill="#525252" /><rect x="649.40" y="372.10" width="113.00" height="0.50" fill="#474747" /><rect x="649.40" y="372.60" width="113.00" height="17.10" fill="#525252" /><rect x="649.40" y="389.70" width="113.00" height="0.50" fill="#474747" /><rect x="649.40" y="390.20" width="112.90" height="16.60" fill="#6b6b6b" /><rect x="649.40" y="390.20" width="13.10" height="16.60" fill="#545454" /><rect x="662.50" y="390.20" width="0.50" height="16.60" fill="#4a4a4a" /><rect x="662.50" y="354.60" width="0.50" height="35.10" fill="#474747" /><rect x="653.4" y="361.4" width="5.8" height="5.2" fill="none" stroke="#5e5e5e" stroke-width="0.5"/><rect x="653.4" y="378.4" width="5.8" height="5.2" fill="none" stroke="#5e5e5e" stroke-width="0.5"/><path d="M668.8 361.3 H675 L671.9 366.6Z" fill="none" stroke="#d8d8d8" stroke-width="0.8"/><path d="M668 383.8 V381 L669 379.4 L669.8 381.2 L670.6 378.6 L671.6 381 L672.4 379.6 L673.4 381.2 L674.2 380 L675.8 382 V383.8Z" fill="#d8d8d8"/><rect x="681" y="360.8" width="1.6" height="2.6" rx="0.8" fill="none" stroke="#d8d8d8" stroke-width="0.5"/><rect x="681" y="363.8" width="1.6" height="2.6" rx="0.8" fill="none" stroke="#d8d8d8" stroke-width="0.5"/><rect x="681" y="378.3" width="1.6" height="2.6" rx="0.8" fill="none" stroke="#d8d8d8" stroke-width="0.5"/><rect x="681" y="381.3" width="1.6" height="2.6" rx="0.8" fill="none" stroke="#d8d8d8" stroke-width="0.5"/><rect x="685.70" y="357.30" width="12.60" height="12.60" fill="#ffffff" /><rect x="685.70" y="374.50" width="12.60" height="13.30" fill="#ffffff" /><g fill="#e2e2e2" opacity="1.0"><rect x="702.84" y="361.40" width="4.39" height="5.00" opacity="0.5"/><rect x="704.01" y="362.43" width="0.83" height="3.21" opacity="0.8"/><rect x="703.20" y="364.50" width="4.05" height="1.00" opacity="0.8"/><rect x="703.12" y="362.35" width="3.01" height="1.00" opacity="0.8"/><rect x="707.72" y="361.40" width="4.39" height="5.00" opacity="0.5"/><rect x="710.97" y="361.58" width="0.83" height="3.54" opacity="0.8"/><rect x="707.90" y="365.30" width="2.30" height="1.00" opacity="0.8"/><rect x="708.82" y="363.12" width="3.92" height="1.00" opacity="0.8"/><rect x="712.60" y="361.40" width="4.39" height="5.00" opacity="0.5"/><rect x="716.01" y="362.56" width="0.83" height="3.41" opacity="0.8"/><rect x="713.51" y="365.16" width="2.26" height="1.00" opacity="0.8"/><rect x="713.99" y="361.87" width="0.83" height="3.41" opacity="0.8"/><rect x="717.48" y="361.40" width="4.39" height="5.00" opacity="0.5"/><rect x="717.83" y="361.66" width="2.88" height="1.00" opacity="0.8"/><rect x="718.03" y="362.61" width="0.83" height="3.16" opacity="0.8"/><rect x="718.49" y="364.73" width="3.04" height="1.00" opacity="0.8"/><rect x="722.36" y="361.40" width="4.39" height="5.00" opacity="0.5"/><rect x="722.82" y="363.43" width="3.99" height="1.00" opacity="0.8"/><rect x="723.46" y="363.02" width="2.26" height="1.00" opacity="0.8"/><rect x="723.30" y="364.69" width="2.28" height="1.00" opacity="0.8"/></g><text x="727.80" y="365.90" font-size="5.6" fill="#e2e2e2" text-anchor="start" >1</text><g fill="#e2e2e2" opacity="1.0"><rect x="702.85" y="378.60" width="4.41" height="5.00" opacity="0.5"/><rect x="703.97" y="379.08" width="2.71" height="1.00" opacity="0.8"/><rect x="705.94" y="379.02" width="0.83" height="3.29" opacity="0.8"/><rect x="705.02" y="378.93" width="0.83" height="4.18" opacity="0.8"/><rect x="707.75" y="378.60" width="4.41" height="5.00" opacity="0.5"/><rect x="707.75" y="379.88" width="3.69" height="1.00" opacity="0.8"/><rect x="709.97" y="379.78" width="0.83" height="2.80" opacity="0.8"/><rect x="708.92" y="380.63" width="4.07" height="1.00" opacity="0.8"/></g><text x="713.40" y="383.10" font-size="5.6" fill="#e2e2e2" text-anchor="start" >1</text><path d="M653.6 399 Q656.6 395.9 659.6 399 Q656.6 402.1 653.6 399Z" fill="#e8e8e8"/><circle cx="656.6" cy="398.9" r="1" fill="#666"/><rect x="663.40" y="390.80" width="16.30" height="16.00" fill="#8a8a8a" /><rect x="664.40" y="391.80" width="14.40" height="14.20" fill="#5a5a5a" /><g id="thumb"></g><g fill="#e8e8e8" opacity="1.0"><rect x="682.05" y="396.30" width="4.46" height="5.00" opacity="0.5"/><rect x="682.58" y="397.49" width="3.20" height="1.00" opacity="0.8"/><rect x="682.80" y="397.30" width="0.84" height="4.00" opacity="0.8"/><rect x="684.76" y="397.06" width="0.84" height="3.41" opacity="0.8"/><rect x="687.00" y="396.30" width="4.46" height="5.00" opacity="0.5"/><rect x="687.97" y="397.91" width="2.38" height="1.00" opacity="0.8"/><rect x="687.30" y="399.37" width="2.36" height="1.00" opacity="0.8"/><rect x="687.40" y="398.62" width="4.17" height="1.00" opacity="0.8"/></g><rect x="750.4" y="398" width="3.8" height="3" fill="none" stroke="#e0e0e0" stroke-width="0.6"/><path d="M751.2 398 V397 A1.1 1.1 0 0 1 753.4 397 V398" stroke="#e0e0e0" stroke-width="0.6" fill="none"/><rect x="649.40" y="427.40" width="119.60" height="9.00" fill="#505050" /><path d="M682.2 432.3 H686.8" stroke="#7a7a7a" stroke-width="0.6"/><rect x="681.2" y="431.2" width="2.8" height="2.2" rx="1.1" fill="none" stroke="#7a7a7a" stroke-width="0.6"/><rect x="685" y="431.2" width="2.8" height="2.2" rx="1.1" fill="none" stroke="#7a7a7a" stroke-width="0.6"/><text x="693.80" y="434.60" font-size="6.4" fill="#7a7a7a" text-anchor="start" font-style="italic">fx</text><rect x="705.2" y="430" width="5.4" height="4.6" fill="#d0d0d0"/><circle cx="707.9" cy="432.3" r="1.3" fill="#4a4a4a"/><circle cx="719.5" cy="432.3" r="2.4" fill="none" stroke="#d0d0d0" stroke-width="0.7"/><path d="M717.8 434 A2.4 2.4 0 0 0 721.2 430.6Z" fill="#d0d0d0"/><path d="M728.6 430.4 H730.6 L731.2 431 H733.4 V434.4 H728.6Z" fill="#d0d0d0"/><rect x="740.2" y="429.8" width="4.2" height="5.2" fill="none" stroke="#d0d0d0" stroke-width="0.7"/><path d="M742.3 431.2 V433.6 M741.1 432.4 H743.5" stroke="#d0d0d0" stroke-width="0.5"/><path d="M752 430.8 H755.8 M753.2 430.8 V430 H754.6 V430.8 M752.5 431.2 L752.9 435 H755 L755.4 431.2" stroke="#d0d0d0" stroke-width="0.6" fill="none"/></svg>
<svg width="0" height="0" style="position:absolute"><filter id="satf" color-interpolation-filters="sRGB" x="0" y="0" width="1" height="1"><feColorMatrix type="matrix" values="1 -0.3 0 0 0 -0.15 1 0 0 0 -0.04 -0.08 1 0 0.03 0 0 0 1 0"/><feComponentTransfer><feFuncR type="table" tableValues="0 0.17 0.36 0.52 0.62 0.72 0.84 0.9 0.94 0.97 1"/><feFuncG type="table" tableValues="0.02 0.11 0.3 0.45 0.52 0.6 0.72 0.86 0.9 0.93 1"/><feFuncB type="table" tableValues="0 0.55 1"/></feComponentTransfer></filter></svg>
<div class="grid" style="--sat:1.6"><div class="t" style="left:217.20px;top:129.70px;--b:0"></div><div class="t" style="left:244.22px;top:129.70px;--b:4"></div><div class="t" style="left:271.24px;top:129.70px;--b:8"></div><div class="t" style="left:298.26px;top:129.70px;--b:12"></div><div class="t" style="left:325.28px;top:129.70px;--b:16"></div><div class="t" style="left:352.30px;top:129.70px;--b:20"></div><div class="t" style="left:379.32px;top:129.70px;--b:24"></div><div class="t" style="left:406.34px;top:129.70px;--b:28"></div><div class="t" style="left:217.20px;top:156.72px;--b:32"></div><div class="t" style="left:244.22px;top:156.72px;--b:36"></div><div class="t" style="left:271.24px;top:156.72px;--b:40"></div><div class="t" style="left:298.26px;top:156.72px;--b:45"></div><div class="t" style="left:325.28px;top:156.72px;--b:49"></div><div class="t" style="left:352.30px;top:156.72px;--b:53"></div><div class="t" style="left:379.32px;top:156.72px;--b:57"></div><div class="t" style="left:406.34px;top:156.72px;--b:61"></div><div class="t" style="left:217.20px;top:183.74px;--b:65"></div><div class="t" style="left:244.22px;top:183.74px;--b:69"></div><div class="t" style="left:271.24px;top:183.74px;--b:73"></div><div class="t" style="left:298.26px;top:183.74px;--b:77"></div><div class="t" style="left:325.28px;top:183.74px;--b:81"></div><div class="t" style="left:352.30px;top:183.74px;--b:85"></div><div class="t" style="left:379.32px;top:183.74px;--b:89"></div><div class="t" style="left:406.34px;top:183.74px;--b:93"></div><div class="t" style="left:217.20px;top:210.76px;--b:97"></div><div class="t" style="left:244.22px;top:210.76px;--b:101"></div><div class="t" style="left:271.24px;top:210.76px;--b:105"></div><div class="t" style="left:298.26px;top:210.76px;--b:109"></div><div class="t" style="left:325.28px;top:210.76px;--b:113"></div><div class="t" style="left:352.30px;top:210.76px;--b:117"></div><div class="t" style="left:379.32px;top:210.76px;--b:121"></div><div class="t" style="left:406.34px;top:210.76px;--b:125"></div><div class="t" style="left:217.20px;top:237.78px;--b:130"></div><div class="t" style="left:244.22px;top:237.78px;--b:134"></div><div class="t" style="left:271.24px;top:237.78px;--b:138"></div><div class="t" style="left:298.26px;top:237.78px;--b:142"></div><div class="t" style="left:325.28px;top:237.78px;--b:146"></div><div class="t" style="left:352.30px;top:237.78px;--b:150"></div><div class="t" style="left:379.32px;top:237.78px;--b:154"></div><div class="t" style="left:406.34px;top:237.78px;--b:158"></div><div class="t" style="left:217.20px;top:264.80px;--b:162"></div><div class="t" style="left:244.22px;top:264.80px;--b:166"></div><div class="t" style="left:271.24px;top:264.80px;--b:170"></div><div class="t" style="left:298.26px;top:264.80px;--b:174"></div><div class="t" style="left:325.28px;top:264.80px;--b:178"></div><div class="t" style="left:352.30px;top:264.80px;--b:182"></div><div class="t" style="left:379.32px;top:264.80px;--b:186"></div><div class="t" style="left:406.34px;top:264.80px;--b:190"></div><div class="t" style="left:217.20px;top:291.82px;--b:194"></div><div class="t" style="left:244.22px;top:291.82px;--b:198"></div><div class="t" style="left:271.24px;top:291.82px;--b:202"></div><div class="t" style="left:298.26px;top:291.82px;--b:206"></div><div class="t" style="left:325.28px;top:291.82px;--b:210"></div><div class="t" style="left:352.30px;top:291.82px;--b:215"></div><div class="t" style="left:379.32px;top:291.82px;--b:219"></div><div class="t" style="left:406.34px;top:291.82px;--b:223"></div><div class="t" style="left:217.20px;top:318.84px;--b:227"></div><div class="t" style="left:244.22px;top:318.84px;--b:231"></div><div class="t" style="left:271.24px;top:318.84px;--b:235"></div><div class="t" style="left:298.26px;top:318.84px;--b:239"></div><div class="t" style="left:325.28px;top:318.84px;--b:243"></div><div class="t" style="left:352.30px;top:318.84px;--b:247"></div><div class="t" style="left:379.32px;top:318.84px;--b:251"></div><div class="t" style="left:406.34px;top:318.84px;--b:255"></div></div><div style="position:absolute;left:0;top:0;width:769px;height:438px;filter:blur(0.3px) saturate(1.15)"><div style="position:absolute;left:665.00px;top:392.40px;width:2.05px;height:2.05px;background:linear-gradient(to right,rgba(0,90,0,0.3),rgba(255,20,0,0.3)),linear-gradient(to bottom,rgb(190,70,0),rgb(70,220,0))"></div><div style="position:absolute;left:666.70px;top:392.40px;width:2.05px;height:2.05px;background:linear-gradient(to right,rgba(0,90,0,0.3),rgba(255,20,0,0.3)),linear-gradient(to bottom,rgb(190,70,4),rgb(70,220,4))"></div><div style="position:absolute;left:668.40px;top:392.40px;width:2.05px;height:2.05px;background:linear-gradient(to right,rgba(0,90,0,0.3),rgba(255,20,0,0.3)),linear-gradient(to bottom,rgb(190,70,8),rgb(70,220,8))"></div><div style="position:absolute;left:670.10px;top:392.40px;width:2.05px;height:2.05px;background:linear-gradient(to right,rgba(0,90,0,0.3),rgba(255,20,0,0.3)),linear-gradient(to bottom,rgb(190,70,12),rgb(70,220,12))"></div><div style="position:absolute;left:671.80px;top:392.40px;width:2.05px;height:2.05px;background:linear-gradient(to right,rgba(0,90,0,0.3),rgba(255,20,0,0.3)),linear-gradient(to bottom,rgb(190,70,16),rgb(70,220,16))"></div><div style="position:absolute;left:673.50px;top:392.40px;width:2.05px;height:2.05px;background:linear-gradient(to right,rgba(0,90,0,0.3),rgba(255,20,0,0.3)),linear-gradient(to bottom,rgb(190,70,20),rgb(70,220,20))"></div><div style="position:absolute;left:675.20px;top:392.40px;width:2.05px;height:2.05px;background:linear-gradient(to right,rgba(0,90,0,0.3),rgba(255,20,0,0.3)),linear-gradient(to bottom,rgb(190,70,24),rgb(70,220,24))"></div><div style="position:absolute;left:676.90px;top:392.40px;width:2.05px;height:2.05px;background:linear-gradient(to right,rgba(0,90,0,0.3),rgba(255,20,0,0.3)),linear-gradient(to bottom,rgb(190,70,28),rgb(70,220,28))"></div><div style="position:absolute;left:665.00px;top:394.10px;width:2.05px;height:2.05px;background:linear-gradient(to right,rgba(0,90,0,0.3),rgba(255,20,0,0.3)),linear-gradient(to bottom,rgb(190,70,32),rgb(70,220,32))"></div><div style="position:absolute;left:666.70px;top:394.10px;width:2.05px;height:2.05px;background:linear-gradient(to right,rgba(0,90,0,0.3),rgba(255,20,0,0.3)),linear-gradient(to bottom,rgb(190,70,36),rgb(70,220,36))"></div><div style="position:absolute;left:668.40px;top:394.10px;width:2.05px;height:2.05px;background:linear-gradient(to right,rgba(0,90,0,0.3),rgba(255,20,0,0.3)),linear-gradient(to bottom,rgb(190,70,40),rgb(70,220,40))"></div><div style="position:absolute;left:670.10px;top:394.10px;width:2.05px;height:2.05px;background:linear-gradient(to right,rgba(0,90,0,0.3),rgba(255,20,0,0.3)),linear-gradient(to bottom,rgb(190,70,45),rgb(70,220,45))"></div><div style="position:absolute;left:671.80px;top:394.10px;width:2.05px;height:2.05px;background:linear-gradient(to right,rgba(0,90,0,0.3),rgba(255,20,0,0.3)),linear-gradient(to bottom,rgb(190,70,49),rgb(70,220,49))"></div><div style="position:absolute;left:673.50px;top:394.10px;width:2.05px;height:2.05px;background:linear-gradient(to right,rgba(0,90,0,0.3),rgba(255,20,0,0.3)),linear-gradient(to bottom,rgb(190,70,53),rgb(70,220,53))"></div><div style="position:absolute;left:675.20px;top:394.10px;width:2.05px;height:2.05px;background:linear-gradient(to right,rgba(0,90,0,0.3),rgba(255,20,0,0.3)),linear-gradient(to bottom,rgb(190,70,57),rgb(70,220,57))"></div><div style="position:absolute;left:676.90px;top:394.10px;width:2.05px;height:2.05px;background:linear-gradient(to right,rgba(0,90,0,0.3),rgba(255,20,0,0.3)),linear-gradient(to bottom,rgb(190,70,61),rgb(70,220,61))"></div><div style="position:absolute;left:665.00px;top:395.80px;width:2.05px;height:2.05px;background:linear-gradient(to right,rgba(0,90,0,0.3),rgba(255,20,0,0.3)),linear-gradient(to bottom,rgb(190,70,65),rgb(70,220,65))"></div><div style="position:absolute;left:666.70px;top:395.80px;width:2.05px;height:2.05px;background:linear-gradient(to right,rgba(0,90,0,0.3),rgba(255,20,0,0.3)),linear-gradient(to bottom,rgb(190,70,69),rgb(70,220,69))"></div><div style="position:absolute;left:668.40px;top:395.80px;width:2.05px;height:2.05px;background:linear-gradient(to right,rgba(0,90,0,0.3),rgba(255,20,0,0.3)),linear-gradient(to bottom,rgb(190,70,73),rgb(70,220,73))"></div><div style="position:absolute;left:670.10px;top:395.80px;width:2.05px;height:2.05px;background:linear-gradient(to right,rgba(0,90,0,0.3),rgba(255,20,0,0.3)),linear-gradient(to bottom,rgb(190,70,77),rgb(70,220,77))"></div><div style="position:absolute;left:671.80px;top:395.80px;width:2.05px;height:2.05px;background:linear-gradient(to right,rgba(0,90,0,0.3),rgba(255,20,0,0.3)),linear-gradient(to bottom,rgb(190,70,81),rgb(70,220,81))"></div><div style="position:absolute;left:673.50px;top:395.80px;width:2.05px;height:2.05px;background:linear-gradient(to right,rgba(0,90,0,0.3),rgba(255,20,0,0.3)),linear-gradient(to bottom,rgb(190,70,85),rgb(70,220,85))"></div><div style="position:absolute;left:675.20px;top:395.80px;width:2.05px;height:2.05px;background:linear-gradient(to right,rgba(0,90,0,0.3),rgba(255,20,0,0.3)),linear-gradient(to bottom,rgb(190,70,89),rgb(70,220,89))"></div><div style="position:absolute;left:676.90px;top:395.80px;width:2.05px;height:2.05px;background:linear-gradient(to right,rgba(0,90,0,0.3),rgba(255,20,0,0.3)),linear-gradient(to bottom,rgb(190,70,93),rgb(70,220,93))"></div><div style="position:absolute;left:665.00px;top:397.50px;width:2.05px;height:2.05px;background:linear-gradient(to right,rgba(0,90,0,0.3),rgba(255,20,0,0.3)),linear-gradient(to bottom,rgb(190,70,97),rgb(70,220,97))"></div><div style="position:absolute;left:666.70px;top:397.50px;width:2.05px;height:2.05px;background:linear-gradient(to right,rgba(0,90,0,0.3),rgba(255,20,0,0.3)),linear-gradient(to bottom,rgb(190,70,101),rgb(70,220,101))"></div><div style="position:absolute;left:668.40px;top:397.50px;width:2.05px;height:2.05px;background:linear-gradient(to right,rgba(0,90,0,0.3),rgba(255,20,0,0.3)),linear-gradient(to bottom,rgb(190,70,105),rgb(70,220,105))"></div><div style="position:absolute;left:670.10px;top:397.50px;width:2.05px;height:2.05px;background:linear-gradient(to right,rgba(0,90,0,0.3),rgba(255,20,0,0.3)),linear-gradient(to bottom,rgb(190,70,109),rgb(70,220,109))"></div><div style="position:absolute;left:671.80px;top:397.50px;width:2.05px;height:2.05px;background:linear-gradient(to right,rgba(0,90,0,0.3),rgba(255,20,0,0.3)),linear-gradient(to bottom,rgb(190,70,113),rgb(70,220,113))"></div><div style="position:absolute;left:673.50px;top:397.50px;width:2.05px;height:2.05px;background:linear-gradient(to right,rgba(0,90,0,0.3),rgba(255,20,0,0.3)),linear-gradient(to bottom,rgb(190,70,117),rgb(70,220,117))"></div><div style="position:absolute;left:675.20px;top:397.50px;width:2.05px;height:2.05px;background:linear-gradient(to right,rgba(0,90,0,0.3),rgba(255,20,0,0.3)),linear-gradient(to bottom,rgb(190,70,121),rgb(70,220,121))"></div><div style="position:absolute;left:676.90px;top:397.50px;width:2.05px;height:2.05px;background:linear-gradient(to right,rgba(0,90,0,0.3),rgba(255,20,0,0.3)),linear-gradient(to bottom,rgb(190,70,125),rgb(70,220,125))"></div><div style="position:absolute;left:665.00px;top:399.20px;width:2.05px;height:2.05px;background:linear-gradient(to right,rgba(0,90,0,0.3),rgba(255,20,0,0.3)),linear-gradient(to bottom,rgb(190,70,130),rgb(70,220,130))"></div><div style="position:absolute;left:666.70px;top:399.20px;width:2.05px;height:2.05px;background:linear-gradient(to right,rgba(0,90,0,0.3),rgba(255,20,0,0.3)),linear-gradient(to bottom,rgb(190,70,134),rgb(70,220,134))"></div><div style="position:absolute;left:668.40px;top:399.20px;width:2.05px;height:2.05px;background:linear-gradient(to right,rgba(0,90,0,0.3),rgba(255,20,0,0.3)),linear-gradient(to bottom,rgb(190,70,138),rgb(70,220,138))"></div><div style="position:absolute;left:670.10px;top:399.20px;width:2.05px;height:2.05px;background:linear-gradient(to right,rgba(0,90,0,0.3),rgba(255,20,0,0.3)),linear-gradient(to bottom,rgb(190,70,142),rgb(70,220,142))"></div><div style="position:absolute;left:671.80px;top:399.20px;width:2.05px;height:2.05px;background:linear-gradient(to right,rgba(0,90,0,0.3),rgba(255,20,0,0.3)),linear-gradient(to bottom,rgb(190,70,146),rgb(70,220,146))"></div><div style="position:absolute;left:673.50px;top:399.20px;width:2.05px;height:2.05px;background:linear-gradient(to right,rgba(0,90,0,0.3),rgba(255,20,0,0.3)),linear-gradient(to bottom,rgb(190,70,150),rgb(70,220,150))"></div><div style="position:absolute;left:675.20px;top:399.20px;width:2.05px;height:2.05px;background:linear-gradient(to right,rgba(0,90,0,0.3),rgba(255,20,0,0.3)),linear-gradient(to bottom,rgb(190,70,154),rgb(70,220,154))"></div><div style="position:absolute;left:676.90px;top:399.20px;width:2.05px;height:2.05px;background:linear-gradient(to right,rgba(0,90,0,0.3),rgba(255,20,0,0.3)),linear-gradient(to bottom,rgb(190,70,158),rgb(70,220,158))"></div><div style="position:absolute;left:665.00px;top:400.90px;width:2.05px;height:2.05px;background:linear-gradient(to right,rgba(0,90,0,0.3),rgba(255,20,0,0.3)),linear-gradient(to bottom,rgb(190,70,162),rgb(70,220,162))"></div><div style="position:absolute;left:666.70px;top:400.90px;width:2.05px;height:2.05px;background:linear-gradient(to right,rgba(0,90,0,0.3),rgba(255,20,0,0.3)),linear-gradient(to bottom,rgb(190,70,166),rgb(70,220,166))"></div><div style="position:absolute;left:668.40px;top:400.90px;width:2.05px;height:2.05px;background:linear-gradient(to right,rgba(0,90,0,0.3),rgba(255,20,0,0.3)),linear-gradient(to bottom,rgb(190,70,170),rgb(70,220,170))"></div><div style="position:absolute;left:670.10px;top:400.90px;width:2.05px;height:2.05px;background:linear-gradient(to right,rgba(0,90,0,0.3),rgba(255,20,0,0.3)),linear-gradient(to bottom,rgb(190,70,174),rgb(70,220,174))"></div><div style="position:absolute;left:671.80px;top:400.90px;width:2.05px;height:2.05px;background:linear-gradient(to right,rgba(0,90,0,0.3),rgba(255,20,0,0.3)),linear-gradient(to bottom,rgb(190,70,178),rgb(70,220,178))"></div><div style="position:absolute;left:673.50px;top:400.90px;width:2.05px;height:2.05px;background:linear-gradient(to right,rgba(0,90,0,0.3),rgba(255,20,0,0.3)),linear-gradient(to bottom,rgb(190,70,182),rgb(70,220,182))"></div><div style="position:absolute;left:675.20px;top:400.90px;width:2.05px;height:2.05px;background:linear-gradient(to right,rgba(0,90,0,0.3),rgba(255,20,0,0.3)),linear-gradient(to bottom,rgb(190,70,186),rgb(70,220,186))"></div><div style="position:absolute;left:676.90px;top:400.90px;width:2.05px;height:2.05px;background:linear-gradient(to right,rgba(0,90,0,0.3),rgba(255,20,0,0.3)),linear-gradient(to bottom,rgb(190,70,190),rgb(70,220,190))"></div><div style="position:absolute;left:665.00px;top:402.60px;width:2.05px;height:2.05px;background:linear-gradient(to right,rgba(0,90,0,0.3),rgba(255,20,0,0.3)),linear-gradient(to bottom,rgb(190,70,194),rgb(70,220,194))"></div><div style="position:absolute;left:666.70px;top:402.60px;width:2.05px;height:2.05px;background:linear-gradient(to right,rgba(0,90,0,0.3),rgba(255,20,0,0.3)),linear-gradient(to bottom,rgb(190,70,198),rgb(70,220,198))"></div><div style="position:absolute;left:668.40px;top:402.60px;width:2.05px;height:2.05px;background:linear-gradient(to right,rgba(0,90,0,0.3),rgba(255,20,0,0.3)),linear-gradient(to bottom,rgb(190,70,202),rgb(70,220,202))"></div><div style="position:absolute;left:670.10px;top:402.60px;width:2.05px;height:2.05px;background:linear-gradient(to right,rgba(0,90,0,0.3),rgba(255,20,0,0.3)),linear-gradient(to bottom,rgb(190,70,206),rgb(70,220,206))"></div><div style="position:absolute;left:671.80px;top:402.60px;width:2.05px;height:2.05px;background:linear-gradient(to right,rgba(0,90,0,0.3),rgba(255,20,0,0.3)),linear-gradient(to bottom,rgb(190,70,210),rgb(70,220,210))"></div><div style="position:absolute;left:673.50px;top:402.60px;width:2.05px;height:2.05px;background:linear-gradient(to right,rgba(0,90,0,0.3),rgba(255,20,0,0.3)),linear-gradient(to bottom,rgb(190,70,215),rgb(70,220,215))"></div><div style="position:absolute;left:675.20px;top:402.60px;width:2.05px;height:2.05px;background:linear-gradient(to right,rgba(0,90,0,0.3),rgba(255,20,0,0.3)),linear-gradient(to bottom,rgb(190,70,219),rgb(70,220,219))"></div><div style="position:absolute;left:676.90px;top:402.60px;width:2.05px;height:2.05px;background:linear-gradient(to right,rgba(0,90,0,0.3),rgba(255,20,0,0.3)),linear-gradient(to bottom,rgb(190,70,223),rgb(70,220,223))"></div><div style="position:absolute;left:665.00px;top:404.30px;width:2.05px;height:2.05px;background:linear-gradient(to right,rgba(0,90,0,0.3),rgba(255,20,0,0.3)),linear-gradient(to bottom,rgb(190,70,227),rgb(70,220,227))"></div><div style="position:absolute;left:666.70px;top:404.30px;width:2.05px;height:2.05px;background:linear-gradient(to right,rgba(0,90,0,0.3),rgba(255,20,0,0.3)),linear-gradient(to bottom,rgb(190,70,231),rgb(70,220,231))"></div><div style="position:absolute;left:668.40px;top:404.30px;width:2.05px;height:2.05px;background:linear-gradient(to right,rgba(0,90,0,0.3),rgba(255,20,0,0.3)),linear-gradient(to bottom,rgb(190,70,235),rgb(70,220,235))"></div><div style="position:absolute;left:670.10px;top:404.30px;width:2.05px;height:2.05px;background:linear-gradient(to right,rgba(0,90,0,0.3),rgba(255,20,0,0.3)),linear-gradient(to bottom,rgb(190,70,239),rgb(70,220,239))"></div><div style="position:absolute;left:671.80px;top:404.30px;width:2.05px;height:2.05px;background:linear-gradient(to right,rgba(0,90,0,0.3),rgba(255,20,0,0.3)),linear-gradient(to bottom,rgb(190,70,243),rgb(70,220,243))"></div><div style="position:absolute;left:673.50px;top:404.30px;width:2.05px;height:2.05px;background:linear-gradient(to right,rgba(0,90,0,0.3),rgba(255,20,0,0.3)),linear-gradient(to bottom,rgb(190,70,247),rgb(70,220,247))"></div><div style="position:absolute;left:675.20px;top:404.30px;width:2.05px;height:2.05px;background:linear-gradient(to right,rgba(0,90,0,0.3),rgba(255,20,0,0.3)),linear-gradient(to bottom,rgb(190,70,251),rgb(70,220,251))"></div><div style="position:absolute;left:676.90px;top:404.30px;width:2.05px;height:2.05px;background:linear-gradient(to right,rgba(0,90,0,0.3),rgba(255,20,0,0.3)),linear-gradient(to bottom,rgb(190,70,255),rgb(70,220,255))"></div></div>
<svg class="ov" width="769" height="438" viewBox="0 0 769 438"><rect x="0" y="0" width="1.8" height="438" fill="#2a2a2a"/><rect x="0" y="0" width="1" height="438" fill="#d6d6d6"/><rect x="217.20" y="129.70" width="0.9" height="216.16" fill="#000" opacity="0.2"/><rect x="217.20" y="129.70" width="216.16" height="0.6" fill="#000" opacity="0.12"/><rect x="244.22" y="129.70" width="0.9" height="216.16" fill="#000" opacity="0.2"/><rect x="217.20" y="156.72" width="216.16" height="0.6" fill="#000" opacity="0.12"/><rect x="271.24" y="129.70" width="0.9" height="216.16" fill="#000" opacity="0.2"/><rect x="217.20" y="183.74" width="216.16" height="0.6" fill="#000" opacity="0.12"/><rect x="298.26" y="129.70" width="0.9" height="216.16" fill="#000" opacity="0.2"/><rect x="217.20" y="210.76" width="216.16" height="0.6" fill="#000" opacity="0.12"/><rect x="325.28" y="129.70" width="0.9" height="216.16" fill="#000" opacity="0.2"/><rect x="217.20" y="237.78" width="216.16" height="0.6" fill="#000" opacity="0.12"/><rect x="352.30" y="129.70" width="0.9" height="216.16" fill="#000" opacity="0.2"/><rect x="217.20" y="264.80" width="216.16" height="0.6" fill="#000" opacity="0.12"/><rect x="379.32" y="129.70" width="0.9" height="216.16" fill="#000" opacity="0.2"/><rect x="217.20" y="291.82" width="216.16" height="0.6" fill="#000" opacity="0.12"/><rect x="406.34" y="129.70" width="0.9" height="216.16" fill="#000" opacity="0.2"/><rect x="217.20" y="318.84" width="216.16" height="0.6" fill="#000" opacity="0.12"/></svg>
</body></html>
